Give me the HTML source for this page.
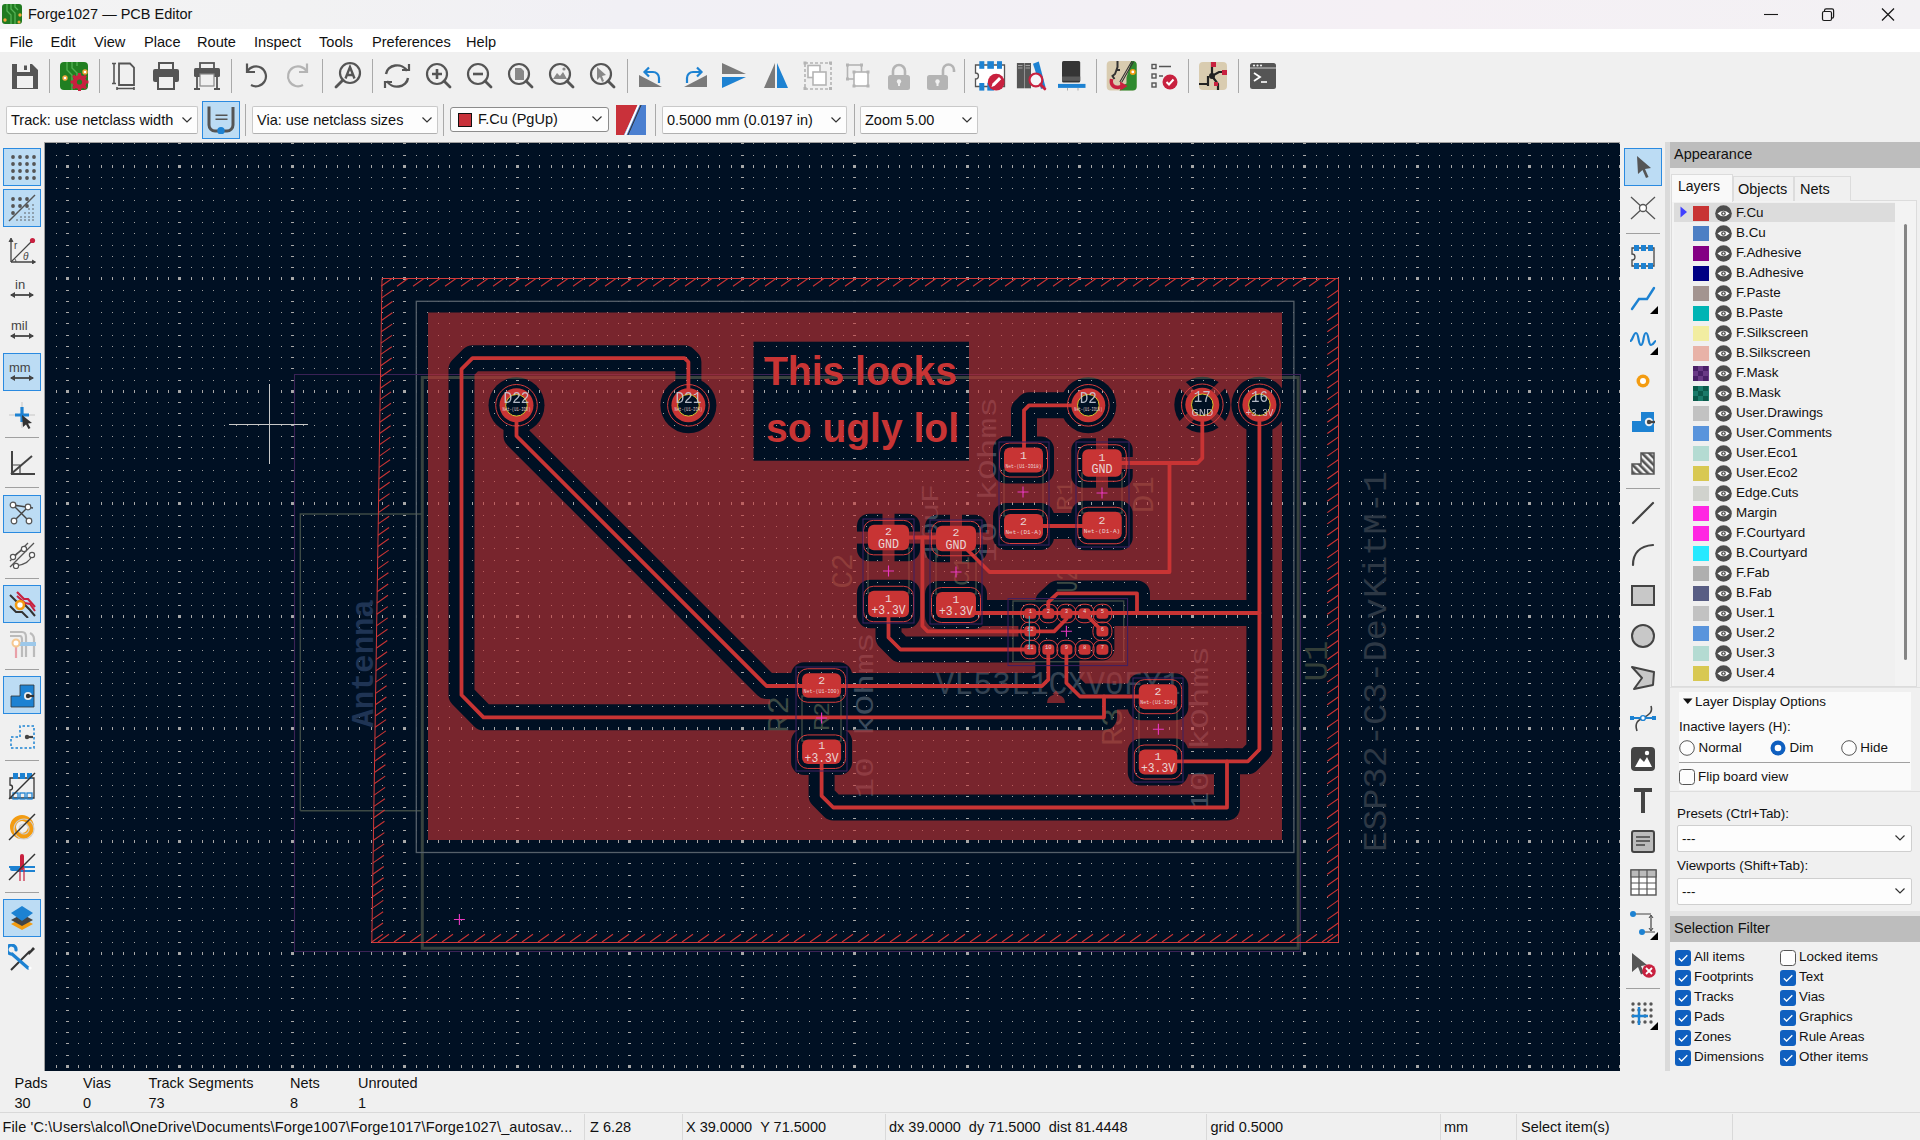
<!DOCTYPE html>
<html><head><meta charset="utf-8"><title>Forge1027 — PCB Editor</title>
<style>
*{margin:0;padding:0;box-sizing:border-box}
html,body{width:1920px;height:1140px;overflow:hidden;background:#f0f0f0;font-family:"Liberation Sans", sans-serif;color:#111}
.a{position:absolute;white-space:nowrap}
.sep{position:absolute;width:1px;background:#a9a9a9}
.hsep{position:absolute;height:1px;background:#a9a9a9}
.sel{position:absolute;background:#bcdcf4;border:1px solid #2a8ae0}
.dd{position:absolute;background:#fdfdfd;border:1px solid #c9c9c9;border-bottom-color:#b0b0b0;border-radius:2px;font-size:14.5px}
.dd span{position:absolute;left:4px;top:5px}
.lay{position:absolute;left:1674px;width:221px;height:20px;font-size:13.4px}
.lay .sw{position:absolute;left:19px;top:3px;width:16px;height:15px}
.lay .t{position:absolute;left:62px;top:2px}
.cb{position:absolute;width:16px;height:16px;border-radius:3px;background:#0f5fbf}
.cbt{position:absolute;font-size:13.4px}
</style></head><body>

<div class="a" style="left:0;top:0;width:1920px;height:29px;background:linear-gradient(90deg,#f3f3f3 0px,#f2f2f3 300px,#f1f0f5 620px,#f3f0f5 1100px,#f5f0f5 1400px,#f3f1f4 1920px)"></div>
<svg style="position:absolute;left:2px;top:4px" width="20" height="20" viewBox="0 0 20 20"><rect x="0" y="0" width="20" height="20" rx="3" fill="#207a20"/>
<path d="M5 0 V7 L9 11 V20 M9 0 V5 L13 9 V20 M13 0 V3 L16 6" stroke="#56b256" stroke-width="1.3" fill="none"/>
<circle cx="18" cy="11" r="1.7" fill="#f4a63a"/><circle cx="3" cy="16" r="1.7" fill="#f4a63a"/><circle cx="17" cy="18" r="1.5" fill="#f4a63a"/></svg>
<div class="a" style="left:28px;top:6px;font-size:14.5px;color:#111">Forge1027 — PCB Editor</div>
<svg style="position:absolute;left:1755px;top:6px" width="150" height="18" viewBox="0 0 150 18"><line x1="9" y1="8.5" x2="23" y2="8.5" stroke="#1a1a1a" stroke-width="1.1"/>
<rect x="67.5" y="5.5" width="9" height="9" rx="1.5" fill="none" stroke="#1a1a1a" stroke-width="1.2"/>
<path d="M69.5 5.5 V4.5 a1.6 1.6 0 0 1 1.6 -1.6 H77 a1.6 1.6 0 0 1 1.6 1.6 V10.5 a1.6 1.6 0 0 1 -1.6 1.6 H76.5" fill="none" stroke="#1a1a1a" stroke-width="1.2"/>
<path d="M127 2.5 L139 14.5 M139 2.5 L127 14.5" stroke="#1a1a1a" stroke-width="1.3"/></svg>
<div class="a" style="left:0;top:29px;width:1920px;height:23px;background:#ffffff"></div>
<div class="a" style="left:9.5px;top:33.5px;font-size:14.6px">File</div>
<div class="a" style="left:50.5px;top:33.5px;font-size:14.6px">Edit</div>
<div class="a" style="left:94px;top:33.5px;font-size:14.6px">View</div>
<div class="a" style="left:144px;top:33.5px;font-size:14.6px">Place</div>
<div class="a" style="left:197px;top:33.5px;font-size:14.6px">Route</div>
<div class="a" style="left:254px;top:33.5px;font-size:14.6px">Inspect</div>
<div class="a" style="left:319px;top:33.5px;font-size:14.6px">Tools</div>
<div class="a" style="left:372px;top:33.5px;font-size:14.6px">Preferences</div>
<div class="a" style="left:466px;top:33.5px;font-size:14.6px">Help</div>
<svg style="position:absolute;left:11px;top:62px" width="28" height="28" viewBox="0 0 28 28" overflow="visible"><path d="M1 2 H21 L27 8 V27 H1 Z" fill="#555"/><rect x="6" y="2" width="13" height="8" fill="#f0f0f0"/><rect x="13" y="3.5" width="3" height="4.5" fill="#555"/><rect x="6" y="14" width="16" height="12" fill="#f0f0f0"/></svg>
<svg style="position:absolute;left:60px;top:62px" width="28" height="28" viewBox="0 0 28 28" overflow="visible"><rect x="0" y="0" width="28" height="28" rx="4" fill="#217f21"/><path d="M7 0 V8 L12 13 V28 M12 0 V6 L17 11 V16 M17 0 V4" stroke="#4fae4f" stroke-width="1.4" fill="none"/><circle cx="25" cy="10" r="2" fill="#fff" stroke="#f4a63a" stroke-width="1.4"/><circle cx="5" cy="16" r="2" fill="#fff" stroke="#f4a63a" stroke-width="1.4"/><g transform="translate(19.5,20)"><circle r="7" fill="#c8213f"/><path d="M0 -9 V9 M-9 0 H9 M-6.4 -6.4 L6.4 6.4 M6.4 -6.4 L-6.4 6.4" stroke="#c8213f" stroke-width="3"/><circle r="2.6" fill="#217f21"/></g></svg>
<svg style="position:absolute;left:110px;top:62px" width="28" height="28" viewBox="0 0 28 28" overflow="visible"><path d="M9 1.5 H20 L24 5.5 V23 H9 Z" fill="none" stroke="#555" stroke-width="1.8"/><path d="M4 1 V22 M2 21.5 H6 M2 1.5 H6 M7 26.5 H24 M7 25 V28 M24 25 V28" stroke="#555" stroke-width="1.6" fill="none"/></svg>
<svg style="position:absolute;left:152px;top:62px" width="28" height="28" viewBox="0 0 28 28" overflow="visible"><rect x="7" y="1" width="14" height="7" fill="none" stroke="#555" stroke-width="2"/><rect x="1" y="7" width="26" height="13" rx="2" fill="#555"/><rect x="6" y="14" width="16" height="13" fill="#f0f0f0" stroke="#555" stroke-width="2"/></svg>
<svg style="position:absolute;left:193px;top:62px" width="28" height="28" viewBox="0 0 28 28" overflow="visible"><rect x="7" y="1" width="14" height="6" fill="none" stroke="#555" stroke-width="1.8"/><rect x="1" y="6" width="26" height="9" rx="1.5" fill="#555"/><rect x="7" y="12" width="14" height="12" fill="#f0f0f0" stroke="#888" stroke-width="1.2"/><path d="M4 15 V27 M1 27 H7 M24 15 V27 M21 27 H27" stroke="#555" stroke-width="1.8"/></svg>
<svg style="position:absolute;left:242px;top:62px" width="28" height="28" viewBox="0 0 28 28" overflow="visible"><path d="M5.5 9 A10 10 0 1 1 9 23" fill="none" stroke="#555" stroke-width="2.2"/><path d="M5 1.5 V10 H13" fill="none" stroke="#555" stroke-width="2.2"/></svg>
<svg style="position:absolute;left:284px;top:62px" width="28" height="28" viewBox="0 0 28 28" overflow="visible"><path d="M22.5 9 A10 10 0 1 0 19 23" fill="none" stroke="#b4b4b4" stroke-width="2.2"/><path d="M23 1.5 V10 H15" fill="none" stroke="#b4b4b4" stroke-width="2.2"/></svg>
<svg style="position:absolute;left:334px;top:62px" width="28" height="28" viewBox="0 0 28 28" overflow="visible"><circle cx="16" cy="11" r="10" fill="none" stroke="#555" stroke-width="2.2"/><path d="M9 18 L2 25" stroke="#555" stroke-width="2.8" stroke-linecap="round"/><path d="M11.5 16.5 L16 5 L20.5 16.5 M13 13 H19" fill="none" stroke="#555" stroke-width="2.4"/></svg>
<svg style="position:absolute;left:383px;top:62px" width="28" height="28" viewBox="0 0 28 28" overflow="visible"><path d="M3 12 A11 9.5 0 0 1 24 9" fill="none" stroke="#555" stroke-width="2.4"/><path d="M25 16 A11 9.5 0 0 1 4 19" fill="none" stroke="#555" stroke-width="2.4"/><path d="M19 8 H26 V2" fill="none" stroke="#555" stroke-width="2.2"/><path d="M9 20 H2 V26" fill="none" stroke="#555" stroke-width="2.2"/></svg>
<svg style="position:absolute;left:424px;top:62px" width="28" height="28" viewBox="0 0 28 28" overflow="visible"><circle cx="13" cy="12" r="10" fill="none" stroke="#555" stroke-width="2.2"/><path d="M20 19 L26 25" stroke="#555" stroke-width="2.8" stroke-linecap="round"/><path d="M13 7 V17 M8 12 H18" stroke="#555" stroke-width="2.6"/></svg>
<svg style="position:absolute;left:465px;top:62px" width="28" height="28" viewBox="0 0 28 28" overflow="visible"><circle cx="13" cy="12" r="10" fill="none" stroke="#555" stroke-width="2.2"/><path d="M20 19 L26 25" stroke="#555" stroke-width="2.8" stroke-linecap="round"/><path d="M8 12 H18" stroke="#555" stroke-width="2.6"/></svg>
<svg style="position:absolute;left:506px;top:62px" width="28" height="28" viewBox="0 0 28 28" overflow="visible"><circle cx="13" cy="12" r="10" fill="none" stroke="#555" stroke-width="2.2"/><path d="M20 19 L26 25" stroke="#555" stroke-width="2.8" stroke-linecap="round"/><path d="M9 6 H15 L18 9 V18 H9 Z" fill="#888"/></svg>
<svg style="position:absolute;left:547px;top:62px" width="28" height="28" viewBox="0 0 28 28" overflow="visible"><circle cx="13" cy="12" r="10" fill="none" stroke="#555" stroke-width="2.2"/><path d="M20 19 L26 25" stroke="#555" stroke-width="2.8" stroke-linecap="round"/><path d="M6 17 L10 11 L13 14 L16 10 L20 17 Z" fill="#888"/><circle cx="17" cy="7" r="1.6" fill="#888"/></svg>
<svg style="position:absolute;left:588px;top:62px" width="28" height="28" viewBox="0 0 28 28" overflow="visible"><circle cx="13" cy="12" r="10" fill="none" stroke="#555" stroke-width="2.2"/><path d="M20 19 L26 25" stroke="#555" stroke-width="2.8" stroke-linecap="round"/><path d="M9 5 L18 13 L14 14 L16 19 L14 20 L12 15 L9 18 Z" fill="#888"/></svg>
<svg style="position:absolute;left:638px;top:62px" width="28" height="28" viewBox="0 0 28 28" overflow="visible"><path d="M1 13 L1 25 L24 25 Z" fill="#7a7a7a"/><path d="M21 21 V16 A6 6 0 0 0 15 10 H8" fill="none" stroke="#1d82d2" stroke-width="2.2"/><path d="M11 5.5 L6.5 10 L11 14.5" fill="none" stroke="#1d82d2" stroke-width="2.2"/></svg>
<svg style="position:absolute;left:680px;top:62px" width="28" height="28" viewBox="0 0 28 28" overflow="visible"><path d="M27 13 L27 25 L4 25 Z" fill="#7a7a7a"/><path d="M7 21 V16 A6 6 0 0 1 13 10 H20" fill="none" stroke="#1d82d2" stroke-width="2.2"/><path d="M17 5.5 L21.5 10 L17 14.5" fill="none" stroke="#1d82d2" stroke-width="2.2"/></svg>
<svg style="position:absolute;left:720px;top:62px" width="28" height="28" viewBox="0 0 28 28" overflow="visible"><path d="M2 1 L26 12 H2 Z" fill="#7a7a7a"/><path d="M2 15 H26 L2 26 Z" fill="#1d82d2"/></svg>
<svg style="position:absolute;left:762px;top:62px" width="28" height="28" viewBox="0 0 28 28" overflow="visible"><path d="M13 1 V26 H2 Z" fill="#7a7a7a"/><path d="M15 1 V26 H26 Z" fill="#1d82d2"/></svg>
<svg style="position:absolute;left:803px;top:62px" width="28" height="28" viewBox="0 0 28 28" overflow="visible"><rect x="2" y="1" width="26" height="26" fill="none" stroke="#b4b4b4" stroke-width="1.6" stroke-dasharray="3 2"/><rect x="5" y="3.5" width="12" height="12" fill="#fff" stroke="#b4b4b4" stroke-width="1.6"/><rect x="10" y="10" width="13" height="13" fill="#fff" stroke="#b4b4b4" stroke-width="1.6"/><g fill="#b4b4b4"><rect x="0.5" y="-0.5" width="3" height="3"/><rect x="26" y="-0.5" width="3" height="3"/><rect x="0.5" y="25" width="3" height="3"/><rect x="26" y="25" width="3" height="3"/></g></svg>
<svg style="position:absolute;left:844px;top:62px" width="28" height="28" viewBox="0 0 28 28" overflow="visible"><rect x="3.5" y="3" width="14" height="14" fill="none" stroke="#b4b4b4" stroke-width="1.6"/><rect x="10" y="10" width="14" height="14" fill="#fff" stroke="#b4b4b4" stroke-width="1.6"/><g fill="#b4b4b4"><rect x="2" y="1.5" width="3" height="3"/><rect x="16" y="1.5" width="3" height="3"/><rect x="2" y="15.5" width="3" height="3"/><rect x="8.5" y="8.5" width="3" height="3"/><rect x="22.5" y="8.5" width="3" height="3"/><rect x="8.5" y="22.5" width="3" height="3"/><rect x="22.5" y="22.5" width="3" height="3"/></g></svg>
<svg style="position:absolute;left:885px;top:62px" width="28" height="28" viewBox="0 0 28 28" overflow="visible"><path d="M8 13 V9 A6 6 0 0 1 20 9 V13" fill="none" stroke="#b4b4b4" stroke-width="2.6"/><rect x="3" y="13" width="22" height="15" rx="2.5" fill="#b4b4b4"/><circle cx="14" cy="19.5" r="2.2" fill="#f0f0f0"/><rect x="13" y="20" width="2" height="4" fill="#f0f0f0"/></svg>
<svg style="position:absolute;left:926px;top:62px" width="28" height="28" viewBox="0 0 28 28" overflow="visible"><path d="M17 13 V8 A5.5 5.5 0 0 1 28 8 V10" fill="none" stroke="#b4b4b4" stroke-width="2.6"/><rect x="1" y="13" width="21" height="15" rx="2.5" fill="#b4b4b4"/><circle cx="11.5" cy="19.5" r="2.2" fill="#f0f0f0"/><rect x="10.5" y="20" width="2" height="4" fill="#f0f0f0"/></svg>
<svg style="position:absolute;left:976px;top:62px" width="28" height="28" viewBox="0 0 28 28" overflow="visible"><path d="M-0.5 3 H28.5 V24.5 H-0.5 V17 A3 3 0 0 0 -0.5 11 Z" fill="#fff" stroke="#555" stroke-width="1.3"/><g fill="#1d82d2"><rect x="3.3" y="-0.8" width="5" height="7.6"/><rect x="11.3" y="-0.8" width="6.6" height="7.6"/><rect x="21" y="-0.8" width="5" height="7.6"/><rect x="3.3" y="21" width="5" height="7.6"/><rect x="11.3" y="21" width="6.6" height="7.6"/></g><circle cx="20.2" cy="20.2" r="8.4" fill="#c8213f"/><path d="M15.5 25 L16.5 21.5 L23 15 L25.2 17.2 L18.7 23.7 Z" fill="#fff"/></svg>
<svg style="position:absolute;left:1017px;top:62px" width="28" height="28" viewBox="0 0 28 28" overflow="visible"><rect x="-0.1" y="1" width="7.1" height="25.3" fill="#555"/><rect x="7.4" y="1" width="6.6" height="25.3" fill="#555"/><path d="M1 3.5 H5.5 M1 6 H5.5 M8.5 3.5 H13 M8.5 6 H13" stroke="#aaa" stroke-width="0.9"/><path d="M16 1.8 L21.8 -0.5 L28.5 25 L24 27 Z" fill="#1d82d2"/><circle cx="18.9" cy="17.9" r="6.4" fill="#f4f6f8" stroke="#c8213f" stroke-width="2.2"/><path d="M23.5 22.5 L27.8 26.8" stroke="#c8213f" stroke-width="3" stroke-linecap="round"/></svg>
<svg style="position:absolute;left:1058px;top:62px" width="28" height="28" viewBox="0 0 28 28" overflow="visible"><rect x="4" y="-1" width="18.2" height="21.5" rx="1.5" fill="#353535"/><rect x="4" y="14.5" width="18.2" height="4.3" fill="#5a5a5a"/><rect x="0" y="21.9" width="27.5" height="4" fill="#1d82d2"/><path d="M9.5 26 V28.5 M20 26 V28.5" stroke="#aaa" stroke-width="1"/></svg>
<svg style="position:absolute;left:1108px;top:62px" width="28" height="28" viewBox="0 0 28 28" overflow="visible"><rect x="-1.3" y="-1" width="30" height="29.5" rx="4" fill="#d9ccb0"/><path d="M23.5 -1 H24.7 A4 4 0 0 1 28.7 3 V24.5 A4 4 0 0 1 24.7 28.5 H11.5 L14.5 23.5 L18.5 21.5 L18.5 15.5 Z" fill="#2f8a2f"/><path d="M25.6 -0.5 L13.6 20.5 M23.8 -0.8 L11.8 20" stroke="#333" stroke-width="1.1"/><circle cx="24.8" cy="9.9" r="2.2" fill="#fff" stroke="#f39c12" stroke-width="1.6"/><path d="M9.5 -1 V5 L8.5 8 L12 8 M8.5 8 L7 12 L4.5 14 L6.5 17" stroke="#333" stroke-width="2" fill="none"/><path d="M3.5 17 Q2 25 10 25.5 L14 24.5" fill="none" stroke="#c8213f" stroke-width="3.4"/><path d="M12 19.5 L19.5 24 L12.5 28.5 Z" fill="#c8213f"/></svg>
<svg style="position:absolute;left:1149px;top:62px" width="28" height="28" viewBox="0 0 28 28" overflow="visible"><g fill="none" stroke="#555" stroke-width="1.4"><rect x="3" y="2.5" width="4" height="4"/><rect x="3" y="12" width="4" height="4"/><rect x="3" y="21" width="4" height="4"/></g><path d="M10 4.5 H22 M10 14 H14" stroke="#555" stroke-width="1.6"/><circle cx="21" cy="20" r="7.5" fill="#c8213f"/><path d="M17.5 20 L20 22.5 L24.5 17.5" fill="none" stroke="#fff" stroke-width="2"/></svg>
<svg style="position:absolute;left:1199px;top:62px" width="28" height="28" viewBox="0 0 28 28" overflow="visible"><rect x="0" y="0" width="28" height="28" rx="4" fill="#d9ccb0"/><path d="M0 22 H10 M13 0 V14 M13 14 L20 10 H28 M13 14 L19 22 V28 M9 14 V24" stroke="#222" stroke-width="2.2" fill="none"/><circle cx="13" cy="14" r="3" fill="#222"/><rect x="12" y="0" width="5" height="5" fill="#c8213f"/><rect x="23" y="8" width="5" height="5" fill="#c8213f"/><rect x="15" y="20" width="4" height="4" fill="#c8213f"/></svg>
<svg style="position:absolute;left:1249px;top:62px" width="28" height="28" viewBox="0 0 28 28" overflow="visible"><rect x="1" y="1" width="26" height="26" rx="2.5" fill="#555"/><path d="M1 6 H27" stroke="#eee" stroke-width="0.8"/><circle cx="5" cy="3.5" r="1.1" fill="#eee"/><circle cx="8.5" cy="3.5" r="1.1" fill="#eee"/><circle cx="12" cy="3.5" r="1.1" fill="#eee"/><path d="M5 11 L11 15 L5 19" fill="none" stroke="#fff" stroke-width="1.8"/><path d="M12 20 H18" stroke="#fff" stroke-width="1.6"/></svg>
<div class="sep" style="left:49.0px;top:59px;height:34px"></div>
<div class="sep" style="left:99.0px;top:59px;height:34px"></div>
<div class="sep" style="left:231.0px;top:59px;height:34px"></div>
<div class="sep" style="left:322.0px;top:59px;height:34px"></div>
<div class="sep" style="left:372.0px;top:59px;height:34px"></div>
<div class="sep" style="left:627.0px;top:59px;height:34px"></div>
<div class="sep" style="left:964.0px;top:59px;height:34px"></div>
<div class="sep" style="left:1096.0px;top:59px;height:34px"></div>
<div class="sep" style="left:1188.0px;top:59px;height:34px"></div>
<div class="sep" style="left:1238.0px;top:59px;height:34px"></div>
<div class="dd" style="left:6px;top:106px;width:192px;height:28px"><span style="left:4px">Track: use netclass width</span></div>
<svg style="position:absolute;left:181px;top:116px" width="12" height="8" viewBox="0 0 12 8"><path d="M1.5 1.5 L6 6 L10.5 1.5" fill="none" stroke="#333" stroke-width="1.2"/></svg>
<div class="sel" style="left:202px;top:101px;width:38px;height:38px"></div>
<svg style="position:absolute;left:207px;top:106px" width="28" height="28" viewBox="0 0 28 28"><path d="M2 0.5 V19 A6 6 0 0 0 8 25 H20 A6 6 0 0 0 26 19 V1" fill="none" stroke="#555" stroke-width="3"/><path d="M8.5 9.3 H20.5 M8.5 13.2 H20.5" stroke="#555" stroke-width="1.5"/><circle cx="14" cy="24.8" r="3.7" fill="#1d82d2"/></svg>
<div class="sep" style="left:245px;top:104px;height:32px"></div>
<div class="dd" style="left:252px;top:106px;width:186px;height:28px"><span style="left:4px">Via: use netclass sizes</span></div>
<svg style="position:absolute;left:421px;top:116px" width="12" height="8" viewBox="0 0 12 8"><path d="M1.5 1.5 L6 6 L10.5 1.5" fill="none" stroke="#333" stroke-width="1.2"/></svg>
<div class="sep" style="left:443px;top:104px;height:32px"></div>
<div class="dd" style="left:450px;top:106.5px;width:158.5px;height:25.5px;border:1px solid #8c8c8c;border-radius:3px"><div style="position:absolute;left:7px;top:5.5px;width:14px;height:14px;background:#c8313a;border:1px solid #111"></div><span style="left:27px;top:3.5px">F.Cu (PgUp)</span></div>
<svg style="position:absolute;left:591px;top:115px" width="12" height="8" viewBox="0 0 12 8"><path d="M1.5 1.5 L6 6 L10.5 1.5" fill="none" stroke="#333" stroke-width="1.2"/></svg>
<svg style="position:absolute;left:616px;top:105px" width="30" height="30" viewBox="0 0 30 30"><path d="M0 0 H22 L8 30 H0 Z" fill="#c9313a"/><path d="M22 0 H30 V30 H8 Z" fill="#4a7fd0"/><path d="M23 -1 L9 31" stroke="#fff" stroke-width="2"/><path d="M25.5 -1 L11.5 31" stroke="#333" stroke-width="1"/></svg>
<div class="sep" style="left:654.5px;top:104px;height:32px"></div>
<div class="dd" style="left:662px;top:106px;width:185px;height:28px"><span style="left:4px">0.5000 mm (0.0197 in)</span></div>
<svg style="position:absolute;left:830px;top:116px" width="12" height="8" viewBox="0 0 12 8"><path d="M1.5 1.5 L6 6 L10.5 1.5" fill="none" stroke="#333" stroke-width="1.2"/></svg>
<div class="sep" style="left:853.5px;top:104px;height:32px"></div>
<div class="dd" style="left:860px;top:106px;width:118px;height:28px"><span style="left:4px">Zoom 5.00</span></div>
<svg style="position:absolute;left:961px;top:116px" width="12" height="8" viewBox="0 0 12 8"><path d="M1.5 1.5 L6 6 L10.5 1.5" fill="none" stroke="#333" stroke-width="1.2"/></svg>
<div class="a" style="left:0;top:142px;width:44px;height:929px;background:#f0f0f0"></div>
<div class="sel" style="left:3px;top:147.7px;width:38px;height:38px"></div>
<svg style="position:absolute;left:8px;top:152px" width="28" height="28" viewBox="0 0 28 28"><circle cx="5" cy="5" r="1.9" fill="#555"/><circle cx="5" cy="12" r="1.9" fill="#555"/><circle cx="5" cy="19" r="1.9" fill="#555"/><circle cx="5" cy="26" r="1.9" fill="#555"/><circle cx="12" cy="5" r="1.9" fill="#555"/><circle cx="12" cy="12" r="1.9" fill="#555"/><circle cx="12" cy="19" r="1.9" fill="#555"/><circle cx="12" cy="26" r="1.9" fill="#555"/><circle cx="19" cy="5" r="1.9" fill="#555"/><circle cx="19" cy="12" r="1.9" fill="#555"/><circle cx="19" cy="19" r="1.9" fill="#555"/><circle cx="19" cy="26" r="1.9" fill="#555"/><circle cx="26" cy="5" r="1.9" fill="#555"/><circle cx="26" cy="12" r="1.9" fill="#555"/><circle cx="26" cy="19" r="1.9" fill="#555"/><circle cx="26" cy="26" r="1.9" fill="#555"/></svg>
<div class="sel" style="left:3px;top:189.2px;width:38px;height:38px"></div>
<svg style="position:absolute;left:8px;top:193.5px" width="28" height="28" viewBox="0 0 28 28"><circle cx="5" cy="5" r="1.9" fill="#555"/><circle cx="5" cy="12" r="1.9" fill="#555"/><circle cx="12" cy="5" r="1.9" fill="#555"/><circle cx="12" cy="12" r="1.9" fill="#555"/><circle cx="19" cy="5" r="1.9" fill="#555"/><circle cx="19" cy="12" r="1.9" fill="#555"/><circle cx="5" cy="19" r="1.9" fill="#555"/><path d="M1 27 L27 1" stroke="#555" stroke-width="1.4"/><circle cx="25" cy="11" r="0.8" fill="#555"/><circle cx="25" cy="15" r="0.8" fill="#555"/><circle cx="21" cy="15" r="0.8" fill="#555"/><circle cx="25" cy="19" r="0.8" fill="#555"/><circle cx="21" cy="19" r="0.8" fill="#555"/><circle cx="17" cy="19" r="0.8" fill="#555"/><circle cx="25" cy="23" r="0.8" fill="#555"/><circle cx="21" cy="23" r="0.8" fill="#555"/><circle cx="17" cy="23" r="0.8" fill="#555"/><circle cx="13" cy="23" r="0.8" fill="#555"/><circle cx="25" cy="26" r="0.8" fill="#555"/><circle cx="21" cy="26" r="0.8" fill="#555"/><circle cx="17" cy="26" r="0.8" fill="#555"/><circle cx="13" cy="26" r="0.8" fill="#555"/><circle cx="9" cy="26" r="0.8" fill="#555"/></svg>
<svg style="position:absolute;left:8px;top:236px" width="28" height="28" viewBox="0 0 28 28"><path d="M3 26 H27 M3 26 V3" stroke="#444" stroke-width="1.3" fill="none"/><path d="M1 6 L3 2 L5 6 M24 24 L27.5 26 L24 28" fill="#444" stroke="#444" stroke-width="1"/><path d="M3 26 L24 5" stroke="#444" stroke-width="1.2"/><circle cx="24.5" cy="4.5" r="2.6" fill="#c8213f"/><text x="6" y="13" font-size="10" fill="#444" font-family="Liberation Sans">r</text><text x="15" y="24" font-size="10" font-style="italic" fill="#444" font-family="Liberation Sans">θ</text><path d="M8 26 A5 5 0 0 0 6.5 22.5" fill="none" stroke="#444" stroke-width="0.9"/></svg>
<svg style="position:absolute;left:8px;top:275px" width="28" height="28" viewBox="0 0 28 28"><text x="7" y="14" font-size="13" fill="#444" font-family="Liberation Sans">in</text><path d="M3 20 H25" stroke="#444" stroke-width="1.8"/><path d="M2 20 L7 17 V23 Z M26 20 L21 17 V23 Z" fill="#444"/></svg>
<svg style="position:absolute;left:8px;top:315.5px" width="28" height="28" viewBox="0 0 28 28"><text x="3" y="14" font-size="13" fill="#444" font-family="Liberation Sans">mil</text><path d="M3 20 H25" stroke="#444" stroke-width="1.8"/><path d="M2 20 L7 17 V23 Z M26 20 L21 17 V23 Z" fill="#444"/></svg>
<div class="sel" style="left:3px;top:353.2px;width:38px;height:38px"></div>
<svg style="position:absolute;left:8px;top:357.5px" width="28" height="28" viewBox="0 0 28 28"><text x="1" y="14" font-size="13" fill="#444" font-family="Liberation Sans">mm</text><path d="M3 20 H25" stroke="#444" stroke-width="1.8"/><path d="M2 20 L7 17 V23 Z M26 20 L21 17 V23 Z" fill="#444"/></svg>
<svg style="position:absolute;left:8px;top:400.5px" width="28" height="28" viewBox="0 0 28 28"><path d="M14 1 V27 M1 14 H27" stroke="#bbb" stroke-width="0.8"/><path d="M14 6 V21 M7 14 H21" stroke="#1d82d2" stroke-width="3.2"/><path d="M14 14 L24 22 L20 22.5 L22.5 27 L20.5 28 L18 23.5 L15 26 Z" fill="#333"/></svg>
<svg style="position:absolute;left:8px;top:448px" width="28" height="28" viewBox="0 0 28 28"><path d="M4 3 V26 H27" stroke="#444" stroke-width="2" fill="none"/><path d="M3 26 L24 8" stroke="#444" stroke-width="2"/><path d="M4 17 H12 V26" stroke="#444" stroke-width="1.2" fill="none"/></svg>
<div class="sel" style="left:3px;top:494.7px;width:38px;height:38px"></div>
<svg style="position:absolute;left:8px;top:499px" width="28" height="28" viewBox="0 0 28 28"><path d="M5 6 L21 22 M20 8 L6 22 M5 6 L25 9" stroke="#444" stroke-width="1.4"/><circle cx="5" cy="6" r="2.8" fill="#fff" stroke="#555" stroke-width="1.2"/><circle cx="20" cy="8" r="2.8" fill="#fff" stroke="#555" stroke-width="1.2"/><circle cx="6" cy="22" r="2.8" fill="#fff" stroke="#555" stroke-width="1.2"/><circle cx="21" cy="22" r="2.8" fill="#fff" stroke="#555" stroke-width="1.2"/></svg>
<svg style="position:absolute;left:8px;top:540.5px" width="28" height="28" viewBox="0 0 28 28"><path d="M2 26 L26 2 M2 20 L20 2" stroke="#555" stroke-width="1.3"/><path d="M8 25 C14 24 22 22 24 14 M5 16 C10 10 14 10 16 8" stroke="#555" stroke-width="1.2" fill="none"/><circle cx="5" cy="16" r="2.6" fill="#fff" stroke="#555" stroke-width="1.2"/><circle cx="16" cy="8" r="2.6" fill="#fff" stroke="#555" stroke-width="1.2"/><circle cx="8" cy="25" r="2.6" fill="#fff" stroke="#555" stroke-width="1.2"/><circle cx="24" cy="14" r="2.6" fill="#fff" stroke="#555" stroke-width="1.2"/></svg>
<div class="sel" style="left:3px;top:585.2px;width:38px;height:38px"></div>
<svg style="position:absolute;left:8px;top:589.5px" width="28" height="28" viewBox="0 0 28 28"><path d="M2 5 L9 12 L14 12 L22 20 L27 26" stroke="#333" stroke-width="2" fill="none"/><path d="M9 2 L16 9 L20 9 L27 17" stroke="#c8213f" stroke-width="2.2" fill="none"/><path d="M2 16 L8 22 L14 22 L20 28" stroke="#333" stroke-width="2" fill="none"/><path d="M9 6 L17 13 L22 14 L27 21" stroke="#c8213f" stroke-width="2" fill="none"/><circle cx="12" cy="15" r="4" fill="#fff" stroke="#f39c12" stroke-width="2.6"/></svg>
<svg style="position:absolute;left:8px;top:630px" width="28" height="28" viewBox="0 0 28 28"><path d="M2 2 H14 Q18 2 18 7 V27 M2 6 H12 Q14 6 14 10 V27" stroke="#bbb" stroke-width="2.2" fill="none"/><path d="M22 3 Q26 5 26 9 V27" stroke="#bbb" stroke-width="2.2" fill="none"/><rect x="8" y="12" width="20" height="4" fill="#9cc8ea"/><path d="M8 16 V28" stroke="#e8a0a8" stroke-width="2.2"/><circle cx="8" cy="13" r="3.5" fill="#fff" stroke="#f6c890" stroke-width="2"/></svg>
<div class="sel" style="left:3px;top:676.2px;width:38px;height:38px"></div>
<svg style="position:absolute;left:8px;top:680.5px" width="28" height="28" viewBox="0 0 28 28"><path d="M3 15 H12 V4 H26 V26 H3 Z" fill="#1d82d2" stroke="#333" stroke-width="0.8"/><circle cx="20" cy="15" r="4" fill="#eee"/><path d="M20 15 H26" stroke="#333" stroke-width="2.2"/><circle cx="20" cy="15" r="2.2" fill="#333"/></svg>
<svg style="position:absolute;left:8px;top:722px" width="28" height="28" viewBox="0 0 28 28"><path d="M3 15 H12 V4 H26 V26 H3 Z" fill="none" stroke="#1d82d2" stroke-width="1.5" stroke-dasharray="2.5 2"/><path d="M19 15 H25" stroke="#444" stroke-width="2.2"/><circle cx="19" cy="15" r="2.2" fill="#444"/></svg>
<svg style="position:absolute;left:8px;top:772px" width="28" height="28" viewBox="0 0 28 28"><path d="M2 6 H26 V26 H2 V18 A2.5 2.5 0 0 0 2 13 Z" fill="none" stroke="#333" stroke-width="1.3"/><g fill="#1d82d2"><rect x="5" y="1" width="5" height="6"/><rect x="12" y="1" width="5" height="6"/><rect x="19" y="1" width="5" height="6"/></g><g fill="none" stroke="#1d82d2" stroke-width="1.3"><rect x="5" y="21" width="5" height="6"/><rect x="12" y="21" width="5" height="6"/><rect x="19" y="21" width="5" height="6"/></g><path d="M1 27 L27 1" stroke="#333" stroke-width="1.4"/></svg>
<svg style="position:absolute;left:8px;top:812.5px" width="28" height="28" viewBox="0 0 28 28"><circle cx="14" cy="14" r="9" fill="none" stroke="#f39c12" stroke-width="6"/><circle cx="16" cy="16" r="10" fill="none" stroke="#ccc" stroke-width="1.2"/><circle cx="16" cy="16" r="5" fill="none" stroke="#ccc" stroke-width="1.2"/><path d="M1 27 L27 1" stroke="#333" stroke-width="1.4"/></svg>
<svg style="position:absolute;left:8px;top:853px" width="28" height="28" viewBox="0 0 28 28"><path d="M1 14 H27 M10 18 H27" stroke="#1d82d2" stroke-width="2"/><path d="M4 16 H13" stroke="#1d82d2" stroke-width="4" stroke-linecap="round"/><path d="M14 3 V15" stroke="#c8213f" stroke-width="4" stroke-linecap="round"/><path d="M12 15 V28 M16 15 V28" stroke="#c8213f" stroke-width="1.2"/><path d="M1 27 L27 1" stroke="#333" stroke-width="1.4"/></svg>
<div class="sel" style="left:3px;top:899.2px;width:38px;height:38px"></div>
<svg style="position:absolute;left:8px;top:903.5px" width="28" height="28" viewBox="0 0 28 28"><path d="M14 14 L25 20 L14 26 L3 20 Z" fill="#f39c12"/><path d="M14 10 L25 16 L14 22 L3 16 Z" fill="#444"/><path d="M14 2 L25 9 L14 17 L3 9 Z" fill="#1d82d2"/></svg>
<svg style="position:absolute;left:8px;top:944px" width="28" height="28" viewBox="0 0 28 28"><path d="M3 26 L22 7" stroke="#333" stroke-width="2"/><path d="M20 9 L25 3 L27 5 L21 11 Z" fill="#333"/><path d="M8 6 A4.5 4.5 0 1 0 4 10 L20 24" fill="none" stroke="#1d82d2" stroke-width="3.2" stroke-linecap="round"/><circle cx="22" cy="24" r="1.6" fill="#fff"/></svg>
<div class="hsep" style="left:5px;top:437px;width:34px;background:#a0a0a0"></div>
<div class="hsep" style="left:5px;top:487px;width:34px;background:#a0a0a0"></div>
<div class="hsep" style="left:5px;top:578px;width:34px;background:#a0a0a0"></div>
<div class="hsep" style="left:5px;top:669px;width:34px;background:#a0a0a0"></div>
<div class="hsep" style="left:5px;top:760px;width:34px;background:#a0a0a0"></div>
<div class="hsep" style="left:5px;top:892px;width:34px;background:#a0a0a0"></div>
<div class="sel" style="left:1624px;top:148px;width:38px;height:38px"></div>
<svg style="position:absolute;left:1629px;top:153px" width="30" height="30" viewBox="0 0 30 30" overflow="visible"><path d="M8 3 L22 15 L16 16 L19.5 24 L17 25 L13.5 17 L9 21 Z" fill="#555"/></svg>
<svg style="position:absolute;left:1629px;top:194px" width="30" height="30" viewBox="0 0 30 30" overflow="visible"><path d="M2 3 L26 25 M26 3 L2 25" stroke="#555" stroke-width="1.3"/><circle cx="14" cy="14" r="3.5" fill="#fff" stroke="#555" stroke-width="1.3"/></svg>
<svg style="position:absolute;left:1629px;top:243px" width="30" height="30" viewBox="0 0 30 30" overflow="visible"><path d="M3 5 H25 V23 H3 V17 A3 3 0 0 0 3 11 Z" fill="none" stroke="#444" stroke-width="1.3"/><g fill="#1d82d2"><rect x="5" y="2" width="5" height="6"/><rect x="12" y="2" width="5" height="6"/><rect x="19" y="2" width="5" height="6"/><rect x="5" y="20" width="5" height="6"/><rect x="12" y="20" width="5" height="6"/><rect x="19" y="20" width="5" height="6"/></g></svg>
<svg style="position:absolute;left:1629px;top:284px" width="30" height="30" viewBox="0 0 30 30" overflow="visible"><path d="M3 25 L10 15 H18 L25 4" fill="none" stroke="#1d82d2" stroke-width="2.4" stroke-linecap="round"/><path d="M21 30 L29 22 V30 Z" fill="#000"/></svg>
<svg style="position:absolute;left:1629px;top:325px" width="30" height="30" viewBox="0 0 30 30" overflow="visible"><path d="M1 16 C4 16 4 8 7 8 C10 8 9 20 12 20 C15 20 14 8 17 8 C20 8 19 20 22 20 C25 20 25 16 27 16" fill="none" stroke="#1d82d2" stroke-width="2.2"/><path d="M21 30 L29 22 V30 Z" fill="#000"/></svg>
<svg style="position:absolute;left:1629px;top:366.5px" width="30" height="30" viewBox="0 0 30 30" overflow="visible"><circle cx="14" cy="14" r="6.5" fill="#f39c12"/><circle cx="14" cy="14" r="3" fill="#fff"/></svg>
<svg style="position:absolute;left:1629px;top:408px" width="30" height="30" viewBox="0 0 30 30" overflow="visible"><path d="M3 13 H12 V4 H25 V24 H3 Z" fill="#1d82d2"/><circle cx="20" cy="14" r="4.2" fill="#f0f0f0"/><path d="M20 14 H26" stroke="#444" stroke-width="2.4"/><circle cx="20" cy="14" r="2.2" fill="#444"/></svg>
<svg style="position:absolute;left:1629px;top:448.5px" width="30" height="30" viewBox="0 0 30 30" overflow="visible"><defs><pattern id="hp" width="5" height="5" patternUnits="userSpaceOnUse" patternTransform="rotate(-45)"><rect width="2.6" height="5" fill="#555"/></pattern></defs><path d="M3 15 H12 V4 H25 V25 H3 Z" fill="url(#hp)" stroke="#555" stroke-width="1.5"/></svg>
<svg style="position:absolute;left:1629px;top:499px" width="30" height="30" viewBox="0 0 30 30" overflow="visible"><path d="M4 24 L24 4" stroke="#444" stroke-width="2.2" stroke-linecap="round"/></svg>
<svg style="position:absolute;left:1629px;top:540px" width="30" height="30" viewBox="0 0 30 30" overflow="visible"><path d="M4 25 C4 14 10 6 24 5" fill="none" stroke="#444" stroke-width="2.2" stroke-linecap="round"/></svg>
<svg style="position:absolute;left:1629px;top:580.5px" width="30" height="30" viewBox="0 0 30 30" overflow="visible"><rect x="3" y="5" width="22" height="19" fill="#c8c8c8" stroke="#444" stroke-width="2"/></svg>
<svg style="position:absolute;left:1629px;top:621.5px" width="30" height="30" viewBox="0 0 30 30" overflow="visible"><circle cx="14" cy="14" r="11" fill="#c8c8c8" stroke="#444" stroke-width="2"/></svg>
<svg style="position:absolute;left:1629px;top:663px" width="30" height="30" viewBox="0 0 30 30" overflow="visible"><path d="M3 4 L25 9 L24 22 L5 26 L13 15 Z" fill="#c8c8c8" stroke="#444" stroke-width="2" stroke-linejoin="round"/></svg>
<svg style="position:absolute;left:1629px;top:703.5px" width="30" height="30" viewBox="0 0 30 30" overflow="visible"><path d="M8 27 C5 18 10 16 14 14 C20 11 24 8 22 2" fill="none" stroke="#444" stroke-width="1.6"/><path d="M2 14 H26" stroke="#1d82d2" stroke-width="2"/><circle cx="14" cy="14" r="2.4" fill="#fff" stroke="#1d82d2" stroke-width="1.4"/><rect x="1" y="12" width="4" height="4" fill="#1d82d2"/><rect x="23" y="12" width="4" height="4" fill="#1d82d2"/></svg>
<svg style="position:absolute;left:1629px;top:744.5px" width="30" height="30" viewBox="0 0 30 30" overflow="visible"><rect x="2" y="2" width="24" height="24" rx="4" fill="#444"/><path d="M6 22 L11 13 L15 17 L18 12 L23 22 Z" fill="#fff"/><circle cx="18" cy="8" r="2.2" fill="#fff"/></svg>
<svg style="position:absolute;left:1629px;top:785.5px" width="30" height="30" viewBox="0 0 30 30" overflow="visible"><path d="M5 4 H23 M14 4 V27" stroke="#444" stroke-width="4"/></svg>
<svg style="position:absolute;left:1629px;top:826.5px" width="30" height="30" viewBox="0 0 30 30" overflow="visible"><rect x="3" y="4" width="22" height="21" rx="2" fill="#bbb" stroke="#444" stroke-width="2"/><path d="M7 10 H21 M7 14 H21 M7 18 H16" stroke="#444" stroke-width="1.6"/></svg>
<svg style="position:absolute;left:1629px;top:868px" width="30" height="30" viewBox="0 0 30 30" overflow="visible"><rect x="2" y="2" width="25" height="25" fill="#fff" stroke="#555" stroke-width="1.4"/><rect x="2" y="2" width="25" height="7" fill="#bbb" stroke="#555" stroke-width="1.2"/><path d="M2 15 H27 M2 21 H27 M10 2 V27 M18 2 V27" stroke="#555" stroke-width="1.2"/></svg>
<svg style="position:absolute;left:1629px;top:909.5px" width="30" height="30" viewBox="0 0 30 30" overflow="visible"><path d="M4 4 H22 M12 22 H26 M22 6 V20" stroke="#444" stroke-width="1.2"/><path d="M20 8 L22 5 L24 8 M20 18 L22 21 L24 18" fill="none" stroke="#444" stroke-width="1"/><circle cx="4" cy="4" r="3" fill="#1d82d2"/><circle cx="13" cy="22" r="3" fill="#1d82d2"/><path d="M21 30 L29 22 V30 Z" fill="#000"/></svg>
<svg style="position:absolute;left:1629px;top:951px" width="30" height="30" viewBox="0 0 30 30" overflow="visible"><path d="M3 2 L18 14 L12 15 L15 22 L12 23.5 L9 16 L3 21 Z" fill="#555"/><circle cx="20" cy="20" r="6.8" fill="#c8213f"/><path d="M17 17 L23 23 M23 17 L17 23" stroke="#fff" stroke-width="1.8"/></svg>
<svg style="position:absolute;left:1629px;top:1000px" width="30" height="30" viewBox="0 0 30 30" overflow="visible"><circle cx="4" cy="4" r="1.7" fill="#555"/><circle cx="4" cy="10" r="1.7" fill="#555"/><circle cx="4" cy="16" r="1.7" fill="#555"/><circle cx="4" cy="22" r="1.7" fill="#555"/><circle cx="10" cy="4" r="1.7" fill="#555"/><circle cx="10" cy="10" r="1.7" fill="#555"/><circle cx="10" cy="16" r="1.7" fill="#555"/><circle cx="10" cy="22" r="1.7" fill="#555"/><circle cx="16" cy="4" r="1.7" fill="#555"/><circle cx="16" cy="10" r="1.7" fill="#555"/><circle cx="16" cy="16" r="1.7" fill="#555"/><circle cx="16" cy="22" r="1.7" fill="#555"/><circle cx="22" cy="4" r="1.7" fill="#555"/><circle cx="22" cy="10" r="1.7" fill="#555"/><circle cx="22" cy="16" r="1.7" fill="#555"/><circle cx="22" cy="22" r="1.7" fill="#555"/><path d="M10 7 V25 M3 16 H19" stroke="#1d82d2" stroke-width="2.4"/><path d="M21 30 L29 22 V30 Z" fill="#000"/></svg>
<div class="hsep" style="left:1626px;top:232.5px;width:34px;background:#a0a0a0"></div>
<div class="hsep" style="left:1626px;top:487.5px;width:34px;background:#a0a0a0"></div>
<div class="hsep" style="left:1626px;top:988px;width:34px;background:#a0a0a0"></div>
<div class="a" style="left:44px;top:142px;width:1576px;height:929px;background:#a0a0a0"></div>
<svg style="position:absolute;left:45px;top:143px" width="1575" height="928" viewBox="45 143 1575 928">
<defs><pattern id="gmin" x="67" y="166" width="45" height="45" patternUnits="userSpaceOnUse"><g fill="#a0a0a0"><rect x="0" y="0" width="1" height="1"/><rect x="0" y="11" width="1" height="1"/><rect x="0" y="22" width="1" height="1"/><rect x="0" y="34" width="1" height="1"/><rect x="11" y="0" width="1" height="1"/><rect x="11" y="11" width="1" height="1"/><rect x="11" y="22" width="1" height="1"/><rect x="11" y="34" width="1" height="1"/><rect x="22" y="0" width="1" height="1"/><rect x="22" y="11" width="1" height="1"/><rect x="22" y="22" width="1" height="1"/><rect x="22" y="34" width="1" height="1"/><rect x="34" y="0" width="1" height="1"/><rect x="34" y="11" width="1" height="1"/><rect x="34" y="22" width="1" height="1"/><rect x="34" y="34" width="1" height="1"/></g></pattern><pattern id="gvb" x="67" y="0" width="45" height="3" patternUnits="userSpaceOnUse"><g fill="#a8a8a8"><rect x="0" y="0" width="1" height="3"/><rect x="11" y="0" width="1" height="3"/><rect x="22" y="0" width="1" height="3"/><rect x="34" y="0" width="1" height="3"/></g></pattern><pattern id="ghb" x="0" y="166" width="3" height="45" patternUnits="userSpaceOnUse"><g fill="#a8a8a8"><rect x="0" y="0" width="3" height="1"/><rect x="0" y="11" width="3" height="1"/><rect x="0" y="22" width="3" height="1"/><rect x="0" y="34" width="3" height="1"/></g></pattern><mask id="zm" maskUnits="userSpaceOnUse" x="45" y="143" width="1575" height="928"><rect x="428" y="312.5" width="854" height="527.5" fill="#fff"/>
<rect x="1071.25" y="438.25" width="61.50" height="49.50" rx="12" fill="#000"/>
<rect x="1096" y="437.25" width="12" height="51.5" fill="#fff"/>
<rect x="1102" y="457" width="31.75" height="12" fill="#fff"/>
<rect x="857.00" y="513.85" width="63.00" height="47.50" rx="12" fill="#000"/>
<rect x="882.5" y="512.85" width="12" height="49.5" fill="#fff"/>
<rect x="856.0" y="531.6" width="65" height="12" fill="#fff"/>
<rect x="925.00" y="514.75" width="62.00" height="47.50" rx="12" fill="#000"/>
<rect x="950" y="513.75" width="12" height="49.5" fill="#fff"/>
<rect x="924.0" y="532.5" width="64" height="12" fill="#fff"/>
<circle cx="1202.3" cy="404.8" r="28" fill="#000"/>
<rect x="1197.8" y="374.8" width="9" height="30" fill="#fff" transform="rotate(45 1202.3 404.8)"/>
<rect x="1197.8" y="374.8" width="9" height="30" fill="#fff" transform="rotate(135 1202.3 404.8)"/>
<rect x="1197.8" y="374.8" width="9" height="30" fill="#fff" transform="rotate(225 1202.3 404.8)"/>
<rect x="1197.8" y="374.8" width="9" height="30" fill="#fff" transform="rotate(315 1202.3 404.8)"/>
<circle cx="1202.3" cy="404.8" r="17" fill="#000"/>
<g fill="none" stroke="#000" stroke-width="26" stroke-linejoin="round" stroke-linecap="round"><polyline points="688.4,405 688.4,362 684.5,358.2 472.5,358.2 461.5,369.2 461.5,695 483.5,717.3 1104,717.3 1104,696.5"/><polyline points="516.5,405 516.5,436 766.5,686 1042,686 1048.3,679.7 1048.3,649.5"/><polyline points="1088.3,405.3 1029,405.3 1024,410.3 1024,460"/><polyline points="1023.5,526 1102,526"/><polyline points="956,613 1259.4,613"/><polyline points="1048.3,613 1048.3,602 1057.5,593.4 1137,593.4 1137,613"/><polyline points="888.5,604 888.5,637.5 900.5,649.5 1030.3,649.5"/><polyline points="1259.4,405 1259.4,749.5 1248,761.3 1158,761.3"/><polyline points="821.6,751.7 821.6,795.8 833.3,807.5 1227,807.5 1227,761.3"/><polyline points="1066.4,649.5 1066.4,683 1080,696.5 1158,696.5"/></g>
<rect x="993.00" y="436.50" width="61.00" height="47.00" rx="13" fill="#000"/>
<rect x="993.00" y="503.00" width="61.00" height="47.00" rx="13" fill="#000"/>
<rect x="1071.25" y="500.75" width="61.50" height="49.50" rx="13" fill="#000"/>
<rect x="857.00" y="579.75" width="63.00" height="48.50" rx="13" fill="#000"/>
<rect x="925.00" y="581.00" width="62.00" height="48.00" rx="13" fill="#000"/>
<rect x="791.10" y="662.25" width="61.00" height="46.50" rx="13" fill="#000"/>
<rect x="791.10" y="728.45" width="61.00" height="46.50" rx="13" fill="#000"/>
<rect x="1127.75" y="673.20" width="60.50" height="47.00" rx="13" fill="#000"/>
<rect x="1127.75" y="738.50" width="60.50" height="47.00" rx="13" fill="#000"/>
<circle cx="516.5" cy="405.3" r="28" fill="#000"/>
<circle cx="688.4" cy="405.3" r="28" fill="#000"/>
<circle cx="1088.3" cy="405.3" r="28" fill="#000"/>
<circle cx="1259.4" cy="404.8" r="28" fill="#000"/>
<rect x="1018.40" y="602.50" width="96.00" height="58.00" rx="12" fill="#000"/>
<rect x="753.5" y="341.7" width="215.5" height="119" fill="#000"/>
<rect x="770" y="694" width="334" height="14" fill="#000"/>
<path d="M1047 703 Q1047 697 1053 695 L1056 692.5 L1059 695 Q1065 697 1065 703 Z" fill="#fff"/></mask></defs>
<rect x="45" y="143" width="1575" height="928" fill="#001023"/>
<g shape-rendering="crispEdges"><rect x="45" y="143" width="1575" height="928" fill="url(#gmin)"/>
<rect x="45" y="52" width="1575" height="3" fill="url(#gvb)" transform="translate(0,0)"/>
<rect x="45" y="165" width="1575" height="3" fill="url(#gvb)" transform="translate(0,0)"/>
<rect x="45" y="277" width="1575" height="3" fill="url(#gvb)" transform="translate(0,0)"/>
<rect x="45" y="390" width="1575" height="3" fill="url(#gvb)" transform="translate(0,0)"/>
<rect x="45" y="502" width="1575" height="3" fill="url(#gvb)" transform="translate(0,0)"/>
<rect x="45" y="615" width="1575" height="3" fill="url(#gvb)" transform="translate(0,0)"/>
<rect x="45" y="727" width="1575" height="3" fill="url(#gvb)" transform="translate(0,0)"/>
<rect x="45" y="840" width="1575" height="3" fill="url(#gvb)" transform="translate(0,0)"/>
<rect x="45" y="952" width="1575" height="3" fill="url(#gvb)" transform="translate(0,0)"/>
<rect x="45" y="1065" width="1575" height="3" fill="url(#gvb)" transform="translate(0,0)"/>
<rect x="-47" y="143" width="3" height="928" fill="url(#ghb)"/>
<rect x="66" y="143" width="3" height="928" fill="url(#ghb)"/>
<rect x="178" y="143" width="3" height="928" fill="url(#ghb)"/>
<rect x="291" y="143" width="3" height="928" fill="url(#ghb)"/>
<rect x="403" y="143" width="3" height="928" fill="url(#ghb)"/>
<rect x="516" y="143" width="3" height="928" fill="url(#ghb)"/>
<rect x="628" y="143" width="3" height="928" fill="url(#ghb)"/>
<rect x="741" y="143" width="3" height="928" fill="url(#ghb)"/>
<rect x="853" y="143" width="3" height="928" fill="url(#ghb)"/>
<rect x="966" y="143" width="3" height="928" fill="url(#ghb)"/>
<rect x="1078" y="143" width="3" height="928" fill="url(#ghb)"/>
<rect x="1191" y="143" width="3" height="928" fill="url(#ghb)"/>
<rect x="1303" y="143" width="3" height="928" fill="url(#ghb)"/>
<rect x="1416" y="143" width="3" height="928" fill="url(#ghb)"/>
<rect x="1528" y="143" width="3" height="928" fill="url(#ghb)"/>
<rect x="1641" y="143" width="3" height="928" fill="url(#ghb)"/>
<g fill="#a8a8a8"><rect x="-47" y="52" width="3" height="3"/><rect x="-47" y="165" width="3" height="3"/><rect x="-47" y="277" width="3" height="3"/><rect x="-47" y="390" width="3" height="3"/><rect x="-47" y="502" width="3" height="3"/><rect x="-47" y="615" width="3" height="3"/><rect x="-47" y="727" width="3" height="3"/><rect x="-47" y="840" width="3" height="3"/><rect x="-47" y="952" width="3" height="3"/><rect x="-47" y="1065" width="3" height="3"/><rect x="66" y="52" width="3" height="3"/><rect x="66" y="165" width="3" height="3"/><rect x="66" y="277" width="3" height="3"/><rect x="66" y="390" width="3" height="3"/><rect x="66" y="502" width="3" height="3"/><rect x="66" y="615" width="3" height="3"/><rect x="66" y="727" width="3" height="3"/><rect x="66" y="840" width="3" height="3"/><rect x="66" y="952" width="3" height="3"/><rect x="66" y="1065" width="3" height="3"/><rect x="178" y="52" width="3" height="3"/><rect x="178" y="165" width="3" height="3"/><rect x="178" y="277" width="3" height="3"/><rect x="178" y="390" width="3" height="3"/><rect x="178" y="502" width="3" height="3"/><rect x="178" y="615" width="3" height="3"/><rect x="178" y="727" width="3" height="3"/><rect x="178" y="840" width="3" height="3"/><rect x="178" y="952" width="3" height="3"/><rect x="178" y="1065" width="3" height="3"/><rect x="291" y="52" width="3" height="3"/><rect x="291" y="165" width="3" height="3"/><rect x="291" y="277" width="3" height="3"/><rect x="291" y="390" width="3" height="3"/><rect x="291" y="502" width="3" height="3"/><rect x="291" y="615" width="3" height="3"/><rect x="291" y="727" width="3" height="3"/><rect x="291" y="840" width="3" height="3"/><rect x="291" y="952" width="3" height="3"/><rect x="291" y="1065" width="3" height="3"/><rect x="403" y="52" width="3" height="3"/><rect x="403" y="165" width="3" height="3"/><rect x="403" y="277" width="3" height="3"/><rect x="403" y="390" width="3" height="3"/><rect x="403" y="502" width="3" height="3"/><rect x="403" y="615" width="3" height="3"/><rect x="403" y="727" width="3" height="3"/><rect x="403" y="840" width="3" height="3"/><rect x="403" y="952" width="3" height="3"/><rect x="403" y="1065" width="3" height="3"/><rect x="516" y="52" width="3" height="3"/><rect x="516" y="165" width="3" height="3"/><rect x="516" y="277" width="3" height="3"/><rect x="516" y="390" width="3" height="3"/><rect x="516" y="502" width="3" height="3"/><rect x="516" y="615" width="3" height="3"/><rect x="516" y="727" width="3" height="3"/><rect x="516" y="840" width="3" height="3"/><rect x="516" y="952" width="3" height="3"/><rect x="516" y="1065" width="3" height="3"/><rect x="628" y="52" width="3" height="3"/><rect x="628" y="165" width="3" height="3"/><rect x="628" y="277" width="3" height="3"/><rect x="628" y="390" width="3" height="3"/><rect x="628" y="502" width="3" height="3"/><rect x="628" y="615" width="3" height="3"/><rect x="628" y="727" width="3" height="3"/><rect x="628" y="840" width="3" height="3"/><rect x="628" y="952" width="3" height="3"/><rect x="628" y="1065" width="3" height="3"/><rect x="741" y="52" width="3" height="3"/><rect x="741" y="165" width="3" height="3"/><rect x="741" y="277" width="3" height="3"/><rect x="741" y="390" width="3" height="3"/><rect x="741" y="502" width="3" height="3"/><rect x="741" y="615" width="3" height="3"/><rect x="741" y="727" width="3" height="3"/><rect x="741" y="840" width="3" height="3"/><rect x="741" y="952" width="3" height="3"/><rect x="741" y="1065" width="3" height="3"/><rect x="853" y="52" width="3" height="3"/><rect x="853" y="165" width="3" height="3"/><rect x="853" y="277" width="3" height="3"/><rect x="853" y="390" width="3" height="3"/><rect x="853" y="502" width="3" height="3"/><rect x="853" y="615" width="3" height="3"/><rect x="853" y="727" width="3" height="3"/><rect x="853" y="840" width="3" height="3"/><rect x="853" y="952" width="3" height="3"/><rect x="853" y="1065" width="3" height="3"/><rect x="966" y="52" width="3" height="3"/><rect x="966" y="165" width="3" height="3"/><rect x="966" y="277" width="3" height="3"/><rect x="966" y="390" width="3" height="3"/><rect x="966" y="502" width="3" height="3"/><rect x="966" y="615" width="3" height="3"/><rect x="966" y="727" width="3" height="3"/><rect x="966" y="840" width="3" height="3"/><rect x="966" y="952" width="3" height="3"/><rect x="966" y="1065" width="3" height="3"/><rect x="1078" y="52" width="3" height="3"/><rect x="1078" y="165" width="3" height="3"/><rect x="1078" y="277" width="3" height="3"/><rect x="1078" y="390" width="3" height="3"/><rect x="1078" y="502" width="3" height="3"/><rect x="1078" y="615" width="3" height="3"/><rect x="1078" y="727" width="3" height="3"/><rect x="1078" y="840" width="3" height="3"/><rect x="1078" y="952" width="3" height="3"/><rect x="1078" y="1065" width="3" height="3"/><rect x="1191" y="52" width="3" height="3"/><rect x="1191" y="165" width="3" height="3"/><rect x="1191" y="277" width="3" height="3"/><rect x="1191" y="390" width="3" height="3"/><rect x="1191" y="502" width="3" height="3"/><rect x="1191" y="615" width="3" height="3"/><rect x="1191" y="727" width="3" height="3"/><rect x="1191" y="840" width="3" height="3"/><rect x="1191" y="952" width="3" height="3"/><rect x="1191" y="1065" width="3" height="3"/><rect x="1303" y="52" width="3" height="3"/><rect x="1303" y="165" width="3" height="3"/><rect x="1303" y="277" width="3" height="3"/><rect x="1303" y="390" width="3" height="3"/><rect x="1303" y="502" width="3" height="3"/><rect x="1303" y="615" width="3" height="3"/><rect x="1303" y="727" width="3" height="3"/><rect x="1303" y="840" width="3" height="3"/><rect x="1303" y="952" width="3" height="3"/><rect x="1303" y="1065" width="3" height="3"/><rect x="1416" y="52" width="3" height="3"/><rect x="1416" y="165" width="3" height="3"/><rect x="1416" y="277" width="3" height="3"/><rect x="1416" y="390" width="3" height="3"/><rect x="1416" y="502" width="3" height="3"/><rect x="1416" y="615" width="3" height="3"/><rect x="1416" y="727" width="3" height="3"/><rect x="1416" y="840" width="3" height="3"/><rect x="1416" y="952" width="3" height="3"/><rect x="1416" y="1065" width="3" height="3"/><rect x="1528" y="52" width="3" height="3"/><rect x="1528" y="165" width="3" height="3"/><rect x="1528" y="277" width="3" height="3"/><rect x="1528" y="390" width="3" height="3"/><rect x="1528" y="502" width="3" height="3"/><rect x="1528" y="615" width="3" height="3"/><rect x="1528" y="727" width="3" height="3"/><rect x="1528" y="840" width="3" height="3"/><rect x="1528" y="952" width="3" height="3"/><rect x="1528" y="1065" width="3" height="3"/><rect x="1641" y="52" width="3" height="3"/><rect x="1641" y="165" width="3" height="3"/><rect x="1641" y="277" width="3" height="3"/><rect x="1641" y="390" width="3" height="3"/><rect x="1641" y="502" width="3" height="3"/><rect x="1641" y="615" width="3" height="3"/><rect x="1641" y="727" width="3" height="3"/><rect x="1641" y="840" width="3" height="3"/><rect x="1641" y="952" width="3" height="3"/><rect x="1641" y="1065" width="3" height="3"/></g></g>
<text x="0" y="0" transform="translate(373,663.5) rotate(-90)" font-family="Liberation Mono" font-size="32" fill="#1f3454" text-anchor="middle" font-weight="bold" textLength="128" lengthAdjust="spacingAndGlyphs">Antenna</text>
<text x="0" y="0" transform="translate(1386,661.5) rotate(-90)" font-family="Liberation Mono" font-size="34" fill="#2d3845" text-anchor="middle" textLength="381" lengthAdjust="spacingAndGlyphs">ESP32-C3-DevKitM-1</text>
<text x="0" y="0" transform="translate(1327,661) rotate(-90)" font-family="Liberation Mono" font-size="34" fill="#333e38" text-anchor="middle" textLength="41" lengthAdjust="spacingAndGlyphs">U1</text>
<text x="0" y="0" transform="translate(873,715.6) rotate(-90)" font-family="Liberation Mono" font-size="26" fill="#3b4a5a" text-anchor="middle" textLength="166" lengthAdjust="spacingAndGlyphs">10 kOhms</text>
<text x="0" y="0" transform="translate(788,714.5) rotate(-90)" font-family="Liberation Mono" font-size="30" fill="#3c4a44" text-anchor="middle" textLength="37" lengthAdjust="spacingAndGlyphs">R2</text>
<text x="0" y="0" transform="translate(829,716.5) rotate(-90)" font-family="Liberation Mono" font-size="22" fill="#3c4a44" text-anchor="middle" textLength="29" lengthAdjust="spacingAndGlyphs">R2</text>
<text x="0" y="0" transform="translate(996,480) rotate(-90)" font-family="Liberation Mono" font-size="26" fill="#3b4a5a" text-anchor="middle" textLength="166" lengthAdjust="spacingAndGlyphs">10 kOhms</text>
<text x="0" y="0" transform="translate(1208,729) rotate(-90)" font-family="Liberation Mono" font-size="26" fill="#3b4a5a" text-anchor="middle" textLength="166" lengthAdjust="spacingAndGlyphs">10 kOhms</text>
<text x="0" y="0" transform="translate(1122,727) rotate(-90)" font-family="Liberation Mono" font-size="30" fill="#3c4a44" text-anchor="middle" textLength="38" lengthAdjust="spacingAndGlyphs">R3</text>
<text x="0" y="0" transform="translate(1153,494.8) rotate(-90)" font-family="Liberation Mono" font-size="30" fill="#3c4a44" text-anchor="middle" textLength="37" lengthAdjust="spacingAndGlyphs">D1</text>
<text x="0" y="0" transform="translate(1072,495.5) rotate(-90)" font-family="Liberation Mono" font-size="22" fill="#3c4a44" text-anchor="middle" textLength="31" lengthAdjust="spacingAndGlyphs">R1</text>
<text x="0" y="0" transform="translate(852,571) rotate(-90)" font-family="Liberation Mono" font-size="30" fill="#3c4a44" text-anchor="middle" textLength="35" lengthAdjust="spacingAndGlyphs">C2</text>
<text x="0" y="0" transform="translate(938,522) rotate(-90)" font-family="Liberation Mono" font-size="24" fill="#3b4a5a" text-anchor="middle" textLength="76" lengthAdjust="spacingAndGlyphs">10uF</text>
<text x="0" y="0" transform="translate(969,571) rotate(-90)" font-family="Liberation Mono" font-size="22" fill="#3c4a44" text-anchor="middle" textLength="30" lengthAdjust="spacingAndGlyphs">C1</text>
<text x="0" y="0" transform="translate(1077,580.5) rotate(-90)" font-family="Liberation Mono" font-size="30" fill="#3c4a44" text-anchor="middle" textLength="24" lengthAdjust="spacingAndGlyphs">U2</text>
<text x="935.5" y="694.4" font-family="Liberation Mono" font-size="34" fill="#334252" textLength="245" lengthAdjust="spacingAndGlyphs">VL53L1CXV0FY1</text>
<g fill="none" stroke="#3c4a44" stroke-width="1.4"><rect x="1004" y="470" width="39" height="46"/><rect x="1082" y="473" width="40" height="40"/><rect x="868" y="548" width="41" height="45"/><rect x="936" y="549" width="40" height="45"/><rect x="802" y="696" width="39" height="45"/><rect x="1139" y="707" width="38" height="45"/></g>
<g fill="none" stroke="#3d4a45" stroke-width="1.4"><path d="M422.3 948.3 V377.6 H1298.2 V948.3 Z" stroke-width="3" stroke="#36423e"/><path d="M300.3 810.8 V514 H421.8 M300.3 810.8 H421.8"/><rect x="1013" y="601" width="110.7" height="60.7"/></g>
<rect x="416.3" y="301.3" width="877.6" height="551.2" fill="none" stroke="#55606a" stroke-width="1.3"/>
<path d="M294.5 951.5 V374.5 H1300.5 V951.5 Z" fill="none" stroke="#3a2256" stroke-width="1.1"/>
<rect x="45" y="143" width="1575" height="928" fill="#c83434" fill-opacity="0.6" mask="url(#zm)"/>
<path d="M382 278.5 H1338.5 V942.5 H371.8 Z" fill="none" stroke="#d23a3a" stroke-width="1"/>
<path d="M381.0 286.2 L392.0 278.5 M397.0 286.2 L408.0 278.5 M413.0 286.2 L424.0 278.5 M429.0 286.2 L440.0 278.5 M445.0 286.2 L456.0 278.5 M461.0 286.2 L472.0 278.5 M477.0 286.2 L488.0 278.5 M493.0 286.2 L504.0 278.5 M509.0 286.2 L520.0 278.5 M525.0 286.2 L536.0 278.5 M541.0 286.2 L552.0 278.5 M557.0 286.2 L568.0 278.5 M573.0 286.2 L584.0 278.5 M589.0 286.2 L600.0 278.5 M605.0 286.2 L616.0 278.5 M621.0 286.2 L632.0 278.5 M637.0 286.2 L648.0 278.5 M653.0 286.2 L664.0 278.5 M669.0 286.2 L680.0 278.5 M685.0 286.2 L696.0 278.5 M701.0 286.2 L712.0 278.5 M717.0 286.2 L728.0 278.5 M733.0 286.2 L744.0 278.5 M749.0 286.2 L760.0 278.5 M765.0 286.2 L776.0 278.5 M781.0 286.2 L792.0 278.5 M797.0 286.2 L808.0 278.5 M813.0 286.2 L824.0 278.5 M829.0 286.2 L840.0 278.5 M845.0 286.2 L856.0 278.5 M861.0 286.2 L872.0 278.5 M877.0 286.2 L888.0 278.5 M893.0 286.2 L904.0 278.5 M909.0 286.2 L920.0 278.5 M925.0 286.2 L936.0 278.5 M941.0 286.2 L952.0 278.5 M957.0 286.2 L968.0 278.5 M973.0 286.2 L984.0 278.5 M989.0 286.2 L1000.0 278.5 M1005.0 286.2 L1016.0 278.5 M1021.0 286.2 L1032.0 278.5 M1037.0 286.2 L1048.0 278.5 M1053.0 286.2 L1064.0 278.5 M1069.0 286.2 L1080.0 278.5 M1085.0 286.2 L1096.0 278.5 M1101.0 286.2 L1112.0 278.5 M1117.0 286.2 L1128.0 278.5 M1133.0 286.2 L1144.0 278.5 M1149.0 286.2 L1160.0 278.5 M1165.0 286.2 L1176.0 278.5 M1181.0 286.2 L1192.0 278.5 M1197.0 286.2 L1208.0 278.5 M1213.0 286.2 L1224.0 278.5 M1229.0 286.2 L1240.0 278.5 M1245.0 286.2 L1256.0 278.5 M1261.0 286.2 L1272.0 278.5 M1277.0 286.2 L1288.0 278.5 M1293.0 286.2 L1304.0 278.5 M1309.0 286.2 L1320.0 278.5 M1325.0 286.2 L1336.0 278.5 M378.0 942 L389.0 934.3 M394.0 942 L405.0 934.3 M410.0 942 L421.0 934.3 M426.0 942 L437.0 934.3 M442.0 942 L453.0 934.3 M458.0 942 L469.0 934.3 M474.0 942 L485.0 934.3 M490.0 942 L501.0 934.3 M506.0 942 L517.0 934.3 M522.0 942 L533.0 934.3 M538.0 942 L549.0 934.3 M554.0 942 L565.0 934.3 M570.0 942 L581.0 934.3 M586.0 942 L597.0 934.3 M602.0 942 L613.0 934.3 M618.0 942 L629.0 934.3 M634.0 942 L645.0 934.3 M650.0 942 L661.0 934.3 M666.0 942 L677.0 934.3 M682.0 942 L693.0 934.3 M698.0 942 L709.0 934.3 M714.0 942 L725.0 934.3 M730.0 942 L741.0 934.3 M746.0 942 L757.0 934.3 M762.0 942 L773.0 934.3 M778.0 942 L789.0 934.3 M794.0 942 L805.0 934.3 M810.0 942 L821.0 934.3 M826.0 942 L837.0 934.3 M842.0 942 L853.0 934.3 M858.0 942 L869.0 934.3 M874.0 942 L885.0 934.3 M890.0 942 L901.0 934.3 M906.0 942 L917.0 934.3 M922.0 942 L933.0 934.3 M938.0 942 L949.0 934.3 M954.0 942 L965.0 934.3 M970.0 942 L981.0 934.3 M986.0 942 L997.0 934.3 M1002.0 942 L1013.0 934.3 M1018.0 942 L1029.0 934.3 M1034.0 942 L1045.0 934.3 M1050.0 942 L1061.0 934.3 M1066.0 942 L1077.0 934.3 M1082.0 942 L1093.0 934.3 M1098.0 942 L1109.0 934.3 M1114.0 942 L1125.0 934.3 M1130.0 942 L1141.0 934.3 M1146.0 942 L1157.0 934.3 M1162.0 942 L1173.0 934.3 M1178.0 942 L1189.0 934.3 M1194.0 942 L1205.0 934.3 M1210.0 942 L1221.0 934.3 M1226.0 942 L1237.0 934.3 M1242.0 942 L1253.0 934.3 M1258.0 942 L1269.0 934.3 M1274.0 942 L1285.0 934.3 M1290.0 942 L1301.0 934.3 M1306.0 942 L1317.0 934.3 M1322.0 942 L1333.0 934.3 M371.8 942.0 L382.8 934.3 M372.0 930.7 L383.0 923.0 M372.1 919.4 L383.1 911.7 M372.3 908.1 L383.3 900.4 M372.5 896.8 L383.5 889.1 M372.7 885.5 L383.7 877.8 M372.8 874.2 L383.8 866.5 M373.0 862.9 L384.0 855.2 M373.2 851.6 L384.2 843.9 M373.4 840.3 L384.4 832.6 M373.5 829.0 L384.5 821.3 M373.7 817.7 L384.7 810.0 M373.9 806.4 L384.9 798.7 M374.1 795.1 L385.1 787.4 M374.2 783.8 L385.2 776.1 M374.4 772.5 L385.4 764.8 M374.6 761.2 L385.6 753.5 M374.8 749.9 L385.8 742.2 M374.9 738.6 L385.9 730.9 M375.1 727.3 L386.1 719.6 M375.3 716.0 L386.3 708.3 M375.4 704.7 L386.4 697.0 M375.6 693.4 L386.6 685.7 M375.8 682.1 L386.8 674.4 M376.0 670.8 L387.0 663.1 M376.1 659.5 L387.1 651.8 M376.3 648.2 L387.3 640.5 M376.5 636.9 L387.5 629.2 M376.7 625.6 L387.7 617.9 M376.8 614.3 L387.8 606.6 M377.0 603.0 L388.0 595.3 M377.2 591.7 L388.2 584.0 M377.4 580.4 L388.4 572.7 M377.5 569.1 L388.5 561.4 M377.7 557.8 L388.7 550.1 M377.9 546.5 L388.9 538.8 M378.1 535.2 L389.1 527.5 M378.2 523.9 L389.2 516.2 M378.4 512.6 L389.4 504.9 M378.6 501.3 L389.6 493.6 M378.7 490.0 L389.7 482.3 M378.9 478.7 L389.9 471.0 M379.1 467.4 L390.1 459.7 M379.3 456.1 L390.3 448.4 M379.4 444.8 L390.4 437.1 M379.6 433.5 L390.6 425.8 M379.8 422.2 L390.8 414.5 M380.0 410.9 L391.0 403.2 M380.1 399.6 L391.1 391.9 M380.3 388.3 L391.3 380.6 M380.5 377.0 L391.5 369.3 M380.7 365.7 L391.7 358.0 M380.8 354.4 L391.8 346.7 M381.0 343.1 L392.0 335.4 M381.2 331.8 L392.2 324.1 M381.4 320.5 L392.4 312.8 M381.5 309.2 L392.5 301.5 M381.7 297.9 L392.7 290.2 M1327.3 942.0 L1338.3 934.3 M1327.3 930.7 L1338.3 923.0 M1327.3 919.4 L1338.3 911.7 M1327.3 908.1 L1338.3 900.4 M1327.3 896.8 L1338.3 889.1 M1327.3 885.5 L1338.3 877.8 M1327.3 874.2 L1338.3 866.5 M1327.3 862.9 L1338.3 855.2 M1327.3 851.6 L1338.3 843.9 M1327.3 840.3 L1338.3 832.6 M1327.3 829.0 L1338.3 821.3 M1327.3 817.7 L1338.3 810.0 M1327.3 806.4 L1338.3 798.7 M1327.3 795.1 L1338.3 787.4 M1327.3 783.8 L1338.3 776.1 M1327.3 772.5 L1338.3 764.8 M1327.3 761.2 L1338.3 753.5 M1327.3 749.9 L1338.3 742.2 M1327.3 738.6 L1338.3 730.9 M1327.3 727.3 L1338.3 719.6 M1327.3 716.0 L1338.3 708.3 M1327.3 704.7 L1338.3 697.0 M1327.3 693.4 L1338.3 685.7 M1327.3 682.1 L1338.3 674.4 M1327.3 670.8 L1338.3 663.1 M1327.3 659.5 L1338.3 651.8 M1327.3 648.2 L1338.3 640.5 M1327.3 636.9 L1338.3 629.2 M1327.3 625.6 L1338.3 617.9 M1327.3 614.3 L1338.3 606.6 M1327.3 603.0 L1338.3 595.3 M1327.3 591.7 L1338.3 584.0 M1327.3 580.4 L1338.3 572.7 M1327.3 569.1 L1338.3 561.4 M1327.3 557.8 L1338.3 550.1 M1327.3 546.5 L1338.3 538.8 M1327.3 535.2 L1338.3 527.5 M1327.3 523.9 L1338.3 516.2 M1327.3 512.6 L1338.3 504.9 M1327.3 501.3 L1338.3 493.6 M1327.3 490.0 L1338.3 482.3 M1327.3 478.7 L1338.3 471.0 M1327.3 467.4 L1338.3 459.7 M1327.3 456.1 L1338.3 448.4 M1327.3 444.8 L1338.3 437.1 M1327.3 433.5 L1338.3 425.8 M1327.3 422.2 L1338.3 414.5 M1327.3 410.9 L1338.3 403.2 M1327.3 399.6 L1338.3 391.9 M1327.3 388.3 L1338.3 380.6 M1327.3 377.0 L1338.3 369.3 M1327.3 365.7 L1338.3 358.0 M1327.3 354.4 L1338.3 346.7 M1327.3 343.1 L1338.3 335.4 M1327.3 331.8 L1338.3 324.1 M1327.3 320.5 L1338.3 312.8 M1327.3 309.2 L1338.3 301.5 M1327.3 297.9 L1338.3 290.2" fill="none" stroke="#c83434" stroke-width="1.1"/>
<g fill="none" stroke="#c83434" stroke-width="3.8" stroke-linejoin="round" stroke-linecap="round"><polyline points="688.4,405 688.4,362 684.5,358.2 472.5,358.2 461.5,369.2 461.5,695 483.5,717.3 1104,717.3 1104,696.5"/><polyline points="516.5,405 516.5,436 766.5,686 1042,686 1048.3,679.7 1048.3,649.5"/><polyline points="1088.3,405.3 1029,405.3 1024,410.3 1024,460"/><polyline points="1023.5,526 1102,526"/><polyline points="1102,463 1197.5,463 1202.3,458.2 1202.3,405"/><polyline points="1169.5,463 1169.5,572 989.5,572 956,538.5"/><polyline points="888.5,537.5 956,537.5"/><polyline points="922.4,537.5 922.4,626 927.4,631.3 1054.2,631.3 1066.4,619 1066.4,613"/><polyline points="1084.6,613 1102.4,631.3"/><polyline points="956,613 1259.4,613"/><polyline points="1048.3,613 1048.3,602 1057.5,593.4 1137,593.4 1137,613"/><polyline points="888.5,604 888.5,637.5 900.5,649.5 1030.3,649.5"/><polyline points="1259.4,405 1259.4,749.5 1248,761.3 1158,761.3"/><polyline points="821.6,751.7 821.6,795.8 833.3,807.5 1227,807.5 1227,761.3"/><polyline points="1066.4,649.5 1066.4,683 1080,696.5 1158,696.5"/></g>
<rect x="1004.00" y="447.50" width="39.00" height="25.00" rx="6" fill="#c83434"/>
<rect x="999.50" y="443.00" width="48.00" height="34.00" rx="10" fill="none" stroke="#d83c3c" stroke-width="1"/>
<rect x="1004.00" y="514.00" width="39.00" height="25.00" rx="6" fill="#c83434"/>
<rect x="999.50" y="509.50" width="48.00" height="34.00" rx="10" fill="none" stroke="#d83c3c" stroke-width="1"/>
<rect x="1082.25" y="449.25" width="39.50" height="27.50" rx="6" fill="#c83434"/>
<rect x="1077.75" y="444.75" width="48.50" height="36.50" rx="10" fill="none" stroke="#d83c3c" stroke-width="1"/>
<rect x="1082.25" y="511.75" width="39.50" height="27.50" rx="6" fill="#c83434"/>
<rect x="1077.75" y="507.25" width="48.50" height="36.50" rx="10" fill="none" stroke="#d83c3c" stroke-width="1"/>
<rect x="868.00" y="524.85" width="41.00" height="25.50" rx="6" fill="#c83434"/>
<rect x="863.50" y="520.35" width="50.00" height="34.50" rx="10" fill="none" stroke="#d83c3c" stroke-width="1"/>
<rect x="936.00" y="525.75" width="40.00" height="25.50" rx="6" fill="#c83434"/>
<rect x="931.50" y="521.25" width="49.00" height="34.50" rx="10" fill="none" stroke="#d83c3c" stroke-width="1"/>
<rect x="868.00" y="590.75" width="41.00" height="26.50" rx="6" fill="#c83434"/>
<rect x="863.50" y="586.25" width="50.00" height="35.50" rx="10" fill="none" stroke="#d83c3c" stroke-width="1"/>
<rect x="936.00" y="592.00" width="40.00" height="26.00" rx="6" fill="#c83434"/>
<rect x="931.50" y="587.50" width="49.00" height="35.00" rx="10" fill="none" stroke="#d83c3c" stroke-width="1"/>
<rect x="802.10" y="673.25" width="39.00" height="24.50" rx="6" fill="#c83434"/>
<rect x="797.60" y="668.75" width="48.00" height="33.50" rx="10" fill="none" stroke="#d83c3c" stroke-width="1"/>
<rect x="802.10" y="739.45" width="39.00" height="24.50" rx="6" fill="#c83434"/>
<rect x="797.60" y="734.95" width="48.00" height="33.50" rx="10" fill="none" stroke="#d83c3c" stroke-width="1"/>
<rect x="1138.75" y="684.20" width="38.50" height="25.00" rx="6" fill="#c83434"/>
<rect x="1134.25" y="679.70" width="47.50" height="34.00" rx="10" fill="none" stroke="#d83c3c" stroke-width="1"/>
<rect x="1138.75" y="749.50" width="38.50" height="25.00" rx="6" fill="#c83434"/>
<rect x="1134.25" y="745.00" width="47.50" height="34.00" rx="10" fill="none" stroke="#d83c3c" stroke-width="1"/>
<text x="1023.5" y="458.5" font-family="Liberation Mono" font-size="11.5" fill="#e8d6d6" text-anchor="middle">1</text>
<text x="1023.5" y="467.5" font-family="Liberation Mono" font-size="5.5" fill="#e8d6d6" text-anchor="middle" textLength="36" lengthAdjust="spacingAndGlyphs">Net-(U1-IO18)</text>
<text x="1023.5" y="525.0" font-family="Liberation Mono" font-size="11.5" fill="#e8d6d6" text-anchor="middle">2</text>
<text x="1023.5" y="534.0" font-family="Liberation Mono" font-size="5.5" fill="#e8d6d6" text-anchor="middle" textLength="36" lengthAdjust="spacingAndGlyphs">Net-(D1-A)</text>
<text x="1102" y="460.5" font-family="Liberation Mono" font-size="11.5" fill="#e8d6d6" text-anchor="middle">1</text>
<text x="1102" y="473" font-family="Liberation Mono" font-size="12" fill="#e8d6d6" text-anchor="middle" textLength="21" lengthAdjust="spacingAndGlyphs">GND</text>
<text x="1102" y="524.0" font-family="Liberation Mono" font-size="11.5" fill="#e8d6d6" text-anchor="middle">2</text>
<text x="1102" y="533.0" font-family="Liberation Mono" font-size="5.5" fill="#e8d6d6" text-anchor="middle" textLength="36.5" lengthAdjust="spacingAndGlyphs">Net-(D1-A)</text>
<text x="888.5" y="535.1" font-family="Liberation Mono" font-size="11.5" fill="#e8d6d6" text-anchor="middle">2</text>
<text x="888.5" y="547.6" font-family="Liberation Mono" font-size="12" fill="#e8d6d6" text-anchor="middle" textLength="21" lengthAdjust="spacingAndGlyphs">GND</text>
<text x="956" y="536.0" font-family="Liberation Mono" font-size="11.5" fill="#e8d6d6" text-anchor="middle">2</text>
<text x="956" y="548.5" font-family="Liberation Mono" font-size="12" fill="#e8d6d6" text-anchor="middle" textLength="21" lengthAdjust="spacingAndGlyphs">GND</text>
<text x="888.5" y="601.5" font-family="Liberation Mono" font-size="11.5" fill="#e8d6d6" text-anchor="middle">1</text>
<text x="888.5" y="614" font-family="Liberation Mono" font-size="12" fill="#e8d6d6" text-anchor="middle" textLength="34" lengthAdjust="spacingAndGlyphs">+3.3V</text>
<text x="956" y="602.5" font-family="Liberation Mono" font-size="11.5" fill="#e8d6d6" text-anchor="middle">1</text>
<text x="956" y="615" font-family="Liberation Mono" font-size="12" fill="#e8d6d6" text-anchor="middle" textLength="34" lengthAdjust="spacingAndGlyphs">+3.3V</text>
<text x="821.6" y="684.0" font-family="Liberation Mono" font-size="11.5" fill="#e8d6d6" text-anchor="middle">2</text>
<text x="821.6" y="693.0" font-family="Liberation Mono" font-size="5.5" fill="#e8d6d6" text-anchor="middle" textLength="36" lengthAdjust="spacingAndGlyphs">Net-(U1-IO0)</text>
<text x="821.6" y="749.2" font-family="Liberation Mono" font-size="11.5" fill="#e8d6d6" text-anchor="middle">1</text>
<text x="821.6" y="761.7" font-family="Liberation Mono" font-size="12" fill="#e8d6d6" text-anchor="middle" textLength="34" lengthAdjust="spacingAndGlyphs">+3.3V</text>
<text x="1158" y="695.2" font-family="Liberation Mono" font-size="11.5" fill="#e8d6d6" text-anchor="middle">2</text>
<text x="1158" y="704.2" font-family="Liberation Mono" font-size="5.5" fill="#e8d6d6" text-anchor="middle" textLength="35.5" lengthAdjust="spacingAndGlyphs">Net-(U1-IO4)</text>
<text x="1158" y="759.5" font-family="Liberation Mono" font-size="11.5" fill="#e8d6d6" text-anchor="middle">1</text>
<text x="1158" y="772" font-family="Liberation Mono" font-size="12" fill="#e8d6d6" text-anchor="middle" textLength="34" lengthAdjust="spacingAndGlyphs">+3.3V</text>
<rect x="1024.30" y="608.25" width="12.00" height="10.50" rx="3.5" fill="#c83434"/>
<rect x="1020.80" y="604.25" width="19.00" height="18.50" rx="8" fill="none" stroke="#d83c3c" stroke-width="1"/>
<text x="1030.3" y="613.0" font-family="Liberation Mono" font-size="5.5" fill="#e8d6d6" text-anchor="middle">1</text>
<rect x="1042.30" y="608.25" width="12.00" height="10.50" rx="3.5" fill="#c83434"/>
<rect x="1038.80" y="604.25" width="19.00" height="18.50" rx="8" fill="none" stroke="#d83c3c" stroke-width="1"/>
<text x="1048.3" y="613.0" font-family="Liberation Mono" font-size="5.5" fill="#e8d6d6" text-anchor="middle">2</text>
<rect x="1060.40" y="608.25" width="12.00" height="10.50" rx="3.5" fill="#c83434"/>
<rect x="1056.90" y="604.25" width="19.00" height="18.50" rx="8" fill="none" stroke="#d83c3c" stroke-width="1"/>
<text x="1066.4" y="613.0" font-family="Liberation Mono" font-size="5.5" fill="#e8d6d6" text-anchor="middle">3</text>
<rect x="1078.60" y="608.25" width="12.00" height="10.50" rx="3.5" fill="#c83434"/>
<rect x="1075.10" y="604.25" width="19.00" height="18.50" rx="8" fill="none" stroke="#d83c3c" stroke-width="1"/>
<text x="1084.6" y="613.0" font-family="Liberation Mono" font-size="5.5" fill="#e8d6d6" text-anchor="middle">4</text>
<rect x="1096.40" y="608.25" width="12.00" height="10.50" rx="3.5" fill="#c83434"/>
<rect x="1092.90" y="604.25" width="19.00" height="18.50" rx="8" fill="none" stroke="#d83c3c" stroke-width="1"/>
<text x="1102.4" y="613.0" font-family="Liberation Mono" font-size="5.5" fill="#e8d6d6" text-anchor="middle">5</text>
<rect x="1096.40" y="626.05" width="12.00" height="10.50" rx="3.5" fill="#c83434"/>
<rect x="1092.90" y="622.05" width="19.00" height="18.50" rx="8" fill="none" stroke="#d83c3c" stroke-width="1"/>
<text x="1102.4" y="630.8" font-family="Liberation Mono" font-size="5.5" fill="#e8d6d6" text-anchor="middle">6</text>
<rect x="1096.40" y="644.25" width="12.00" height="10.50" rx="3.5" fill="#c83434"/>
<rect x="1092.90" y="640.25" width="19.00" height="18.50" rx="8" fill="none" stroke="#d83c3c" stroke-width="1"/>
<text x="1102.4" y="649.0" font-family="Liberation Mono" font-size="5.5" fill="#e8d6d6" text-anchor="middle">7</text>
<rect x="1078.60" y="644.25" width="12.00" height="10.50" rx="3.5" fill="#c83434"/>
<rect x="1075.10" y="640.25" width="19.00" height="18.50" rx="8" fill="none" stroke="#d83c3c" stroke-width="1"/>
<text x="1084.6" y="649.0" font-family="Liberation Mono" font-size="5.5" fill="#e8d6d6" text-anchor="middle">8</text>
<rect x="1060.40" y="644.25" width="12.00" height="10.50" rx="3.5" fill="#c83434"/>
<rect x="1056.90" y="640.25" width="19.00" height="18.50" rx="8" fill="none" stroke="#d83c3c" stroke-width="1"/>
<text x="1066.4" y="649.0" font-family="Liberation Mono" font-size="5.5" fill="#e8d6d6" text-anchor="middle">9</text>
<rect x="1042.30" y="644.25" width="12.00" height="10.50" rx="3.5" fill="#c83434"/>
<rect x="1038.80" y="640.25" width="19.00" height="18.50" rx="8" fill="none" stroke="#d83c3c" stroke-width="1"/>
<text x="1048.3" y="649.0" font-family="Liberation Mono" font-size="5.5" fill="#e8d6d6" text-anchor="middle">10</text>
<rect x="1024.30" y="644.25" width="12.00" height="10.50" rx="3.5" fill="#c83434"/>
<rect x="1020.80" y="640.25" width="19.00" height="18.50" rx="8" fill="none" stroke="#d83c3c" stroke-width="1"/>
<text x="1030.3" y="649.0" font-family="Liberation Mono" font-size="5.5" fill="#e8d6d6" text-anchor="middle">11</text>
<rect x="1024.30" y="626.05" width="12.00" height="10.50" rx="3.5" fill="#c83434"/>
<rect x="1020.80" y="622.05" width="19.00" height="18.50" rx="8" fill="none" stroke="#d83c3c" stroke-width="1"/>
<text x="1030.3" y="630.8" font-family="Liberation Mono" font-size="5.5" fill="#e8d6d6" text-anchor="middle">12</text>
<circle cx="516.5" cy="405.3" r="17" fill="#c83434"/>
<circle cx="516.5" cy="405.3" r="20.8" fill="none" stroke="#d83c3c" stroke-width="1"/>
<circle cx="516.5" cy="405.3" r="10.8" fill="#001023" stroke="#d8c830" stroke-width="1"/>
<text x="516.5" y="402.8" font-family="Liberation Mono" font-size="16" fill="#c8ccd8" text-anchor="middle" textLength="26" lengthAdjust="spacingAndGlyphs" opacity="0.9">D22</text>
<text x="516.5" y="411.3" font-family="Liberation Mono" font-size="5" fill="#e0d0d0" text-anchor="middle" textLength="28" lengthAdjust="spacingAndGlyphs">Net-(U1-IO0)</text>
<circle cx="688.4" cy="405.3" r="17" fill="#c83434"/>
<circle cx="688.4" cy="405.3" r="20.8" fill="none" stroke="#d83c3c" stroke-width="1"/>
<circle cx="688.4" cy="405.3" r="10.8" fill="#001023" stroke="#d8c830" stroke-width="1"/>
<text x="688.4" y="402.8" font-family="Liberation Mono" font-size="16" fill="#c8ccd8" text-anchor="middle" textLength="26" lengthAdjust="spacingAndGlyphs" opacity="0.9">D21</text>
<text x="688.4" y="411.3" font-family="Liberation Mono" font-size="5" fill="#e0d0d0" text-anchor="middle" textLength="28" lengthAdjust="spacingAndGlyphs">Net-(U1-IO4)</text>
<circle cx="1088.3" cy="405.3" r="17" fill="#c83434"/>
<circle cx="1088.3" cy="405.3" r="20.8" fill="none" stroke="#d83c3c" stroke-width="1"/>
<circle cx="1088.3" cy="405.3" r="10.8" fill="#001023" stroke="#d8c830" stroke-width="1"/>
<text x="1088.3" y="402.8" font-family="Liberation Mono" font-size="16" fill="#c8ccd8" text-anchor="middle" textLength="17" lengthAdjust="spacingAndGlyphs" opacity="0.9">D2</text>
<text x="1088.3" y="411.3" font-family="Liberation Mono" font-size="5" fill="#e0d0d0" text-anchor="middle" textLength="28" lengthAdjust="spacingAndGlyphs">Net-(U1-IO18)</text>
<circle cx="1202.3" cy="404.8" r="17" fill="#c83434"/>
<circle cx="1202.3" cy="404.8" r="20.8" fill="none" stroke="#d83c3c" stroke-width="1"/>
<circle cx="1202.3" cy="404.8" r="10.8" fill="#001023" stroke="#d8c830" stroke-width="1"/>
<text x="1202.3" y="402.3" font-family="Liberation Mono" font-size="16" fill="#c8ccd8" text-anchor="middle" textLength="17" lengthAdjust="spacingAndGlyphs" opacity="0.9">17</text>
<text x="1202.3" y="415.8" font-family="Liberation Mono" font-size="11" fill="#d8d0d8" text-anchor="middle" textLength="22" lengthAdjust="spacingAndGlyphs" opacity="0.85">GND</text>
<circle cx="1259.4" cy="404.8" r="17" fill="#c83434"/>
<circle cx="1259.4" cy="404.8" r="20.8" fill="none" stroke="#d83c3c" stroke-width="1"/>
<circle cx="1259.4" cy="404.8" r="10.8" fill="#001023" stroke="#d8c830" stroke-width="1"/>
<text x="1259.4" y="402.3" font-family="Liberation Mono" font-size="16" fill="#c8ccd8" text-anchor="middle" textLength="17" lengthAdjust="spacingAndGlyphs" opacity="0.9">16</text>
<text x="1259.4" y="415.8" font-family="Liberation Mono" font-size="11" fill="#d8d0d8" text-anchor="middle" textLength="28" lengthAdjust="spacingAndGlyphs" opacity="0.85">+3.3V</text>
<g fill="none" stroke="#3f2062" stroke-width="1"><rect x="999" y="442" width="50" height="103"/><rect x="1076" y="442" width="53" height="105"/><rect x="863" y="519" width="51" height="104"/><rect x="930" y="520" width="52" height="104"/><rect x="796" y="667" width="51" height="104"/><rect x="1133" y="678" width="50" height="104"/><rect x="1008" y="598.6" width="119.6" height="67"/></g>
<path d="M883.0 571 H894.0 M888.5 565.5 V576.5" stroke="#e838c0" stroke-width="1.1"/>
<path d="M950.5 572 H961.5 M956 566.5 V577.5" stroke="#e838c0" stroke-width="1.1"/>
<path d="M1017.5 492 H1028.5 M1023 486.5 V497.5" stroke="#e838c0" stroke-width="1.1"/>
<path d="M1096.5 493 H1107.5 M1102 487.5 V498.5" stroke="#e838c0" stroke-width="1.1"/>
<path d="M816.1 718 H827.1 M821.6 712.5 V723.5" stroke="#e838c0" stroke-width="1.1"/>
<path d="M1152.9 729.3 H1163.9 M1158.4 723.8 V734.8" stroke="#e838c0" stroke-width="1.1"/>
<path d="M1060.9 631.3 H1071.9 M1066.4 625.8 V636.8" stroke="#e838c0" stroke-width="1.1"/>
<path d="M453.9 919.5 H464.9 M459.4 914.0 V925.0" stroke="#e838c0" stroke-width="1.1"/>
<line x1="1029.3" y1="616" x2="1029.3" y2="649.5" stroke="#3fb0c0" stroke-width="1"/>
<path d="M229 424.5 H308 M269.5 384 V464" stroke="#c8c8c8" stroke-width="1"/>
<text x="764" y="385.2" font-family="Liberation Sans" font-weight="bold" font-size="40" fill="#c83434" textLength="193" lengthAdjust="spacingAndGlyphs">This looks</text>
<text x="766" y="442" font-family="Liberation Sans" font-weight="bold" font-size="40" fill="#c83434" textLength="193" lengthAdjust="spacingAndGlyphs">so ugly lol</text>
</svg>
<div class="a" style="left:1665px;top:142px;width:5px;height:929px;background:#dadada"></div>
<div class="a" style="left:1670px;top:142px;width:250px;height:929px;background:#f0f0f0"></div>
<div class="a" style="left:1670px;top:142px;width:250px;height:25.5px;background:#bdbdbd"></div>
<div class="a" style="left:1674px;top:146px;font-size:14.5px;color:#111">Appearance</div>
<div class="a" style="left:1671px;top:200px;width:246px;height:487px;background:#f3f3f3;border:1px solid #dcdcdc"></div>
<div class="a" style="left:1671px;top:173.5px;width:62px;height:28px;background:#f9f9f9;border:1px solid #dcdcdc;border-bottom:none"></div>
<div class="a" style="left:1733px;top:176px;width:60.5px;height:24.5px;background:#f0f0f0;border:1px solid #dcdcdc;border-bottom:none"></div>
<div class="a" style="left:1793.5px;top:176px;width:57.5px;height:24.5px;background:#f0f0f0;border:1px solid #dcdcdc;border-bottom:none"></div>
<div class="a" style="left:1678px;top:178px;font-size:14px">Layers</div>
<div class="a" style="left:1738px;top:180.5px;font-size:14.5px">Objects</div>
<div class="a" style="left:1800px;top:180.5px;font-size:14.5px">Nets</div>
<div class="a" style="left:1674px;top:202px;width:221px;height:484px;background:#f0f0f0"></div>
<div class="a" style="left:1674px;top:202.5px;width:221px;height:19.5px;background:#dcdcdc"></div>
<svg style="position:absolute;left:1680px;top:206px" width="8" height="12" viewBox="0 0 8 12"><path d="M0.5 0.5 L7 6 L0.5 11.5 Z" fill="#4040ff"/></svg>
<div class="lay" style="top:203px"><div class="sw" style="background:#c83434"></div><svg style="position:absolute;left:41px;top:2px" width="17" height="17" viewBox="0 0 17 17"><circle cx="8.5" cy="8.5" r="8.3" fill="#4d4d4d"/><path d="M2.5 8.5 Q8.5 2.8 14.5 8.5 Q8.5 14.2 2.5 8.5 Z" fill="#fff"/><circle cx="8.5" cy="8.5" r="2.3" fill="#4d4d4d"/><circle cx="8.5" cy="8.5" r="1" fill="#fff"/></svg><div class="t">F.Cu</div></div>
<div class="lay" style="top:223px"><div class="sw" style="background:#4d7fc4"></div><svg style="position:absolute;left:41px;top:2px" width="17" height="17" viewBox="0 0 17 17"><circle cx="8.5" cy="8.5" r="8.3" fill="#4d4d4d"/><path d="M2.5 8.5 Q8.5 2.8 14.5 8.5 Q8.5 14.2 2.5 8.5 Z" fill="#fff"/><circle cx="8.5" cy="8.5" r="2.3" fill="#4d4d4d"/><circle cx="8.5" cy="8.5" r="1" fill="#fff"/></svg><div class="t">B.Cu</div></div>
<div class="lay" style="top:243px"><div class="sw" style="background:#840084"></div><svg style="position:absolute;left:41px;top:2px" width="17" height="17" viewBox="0 0 17 17"><circle cx="8.5" cy="8.5" r="8.3" fill="#4d4d4d"/><path d="M2.5 8.5 Q8.5 2.8 14.5 8.5 Q8.5 14.2 2.5 8.5 Z" fill="#fff"/><circle cx="8.5" cy="8.5" r="2.3" fill="#4d4d4d"/><circle cx="8.5" cy="8.5" r="1" fill="#fff"/></svg><div class="t">F.Adhesive</div></div>
<div class="lay" style="top:263px"><div class="sw" style="background:#000084"></div><svg style="position:absolute;left:41px;top:2px" width="17" height="17" viewBox="0 0 17 17"><circle cx="8.5" cy="8.5" r="8.3" fill="#4d4d4d"/><path d="M2.5 8.5 Q8.5 2.8 14.5 8.5 Q8.5 14.2 2.5 8.5 Z" fill="#fff"/><circle cx="8.5" cy="8.5" r="2.3" fill="#4d4d4d"/><circle cx="8.5" cy="8.5" r="1" fill="#fff"/></svg><div class="t">B.Adhesive</div></div>
<div class="lay" style="top:283px"><div class="sw" style="background:#a39490"></div><svg style="position:absolute;left:41px;top:2px" width="17" height="17" viewBox="0 0 17 17"><circle cx="8.5" cy="8.5" r="8.3" fill="#4d4d4d"/><path d="M2.5 8.5 Q8.5 2.8 14.5 8.5 Q8.5 14.2 2.5 8.5 Z" fill="#fff"/><circle cx="8.5" cy="8.5" r="2.3" fill="#4d4d4d"/><circle cx="8.5" cy="8.5" r="1" fill="#fff"/></svg><div class="t">F.Paste</div></div>
<div class="lay" style="top:303px"><div class="sw" style="background:#00b4b4"></div><svg style="position:absolute;left:41px;top:2px" width="17" height="17" viewBox="0 0 17 17"><circle cx="8.5" cy="8.5" r="8.3" fill="#4d4d4d"/><path d="M2.5 8.5 Q8.5 2.8 14.5 8.5 Q8.5 14.2 2.5 8.5 Z" fill="#fff"/><circle cx="8.5" cy="8.5" r="2.3" fill="#4d4d4d"/><circle cx="8.5" cy="8.5" r="1" fill="#fff"/></svg><div class="t">B.Paste</div></div>
<div class="lay" style="top:323px"><div class="sw" style="background:#f2eda1"></div><svg style="position:absolute;left:41px;top:2px" width="17" height="17" viewBox="0 0 17 17"><circle cx="8.5" cy="8.5" r="8.3" fill="#4d4d4d"/><path d="M2.5 8.5 Q8.5 2.8 14.5 8.5 Q8.5 14.2 2.5 8.5 Z" fill="#fff"/><circle cx="8.5" cy="8.5" r="2.3" fill="#4d4d4d"/><circle cx="8.5" cy="8.5" r="1" fill="#fff"/></svg><div class="t">F.Silkscreen</div></div>
<div class="lay" style="top:343px"><div class="sw" style="background:#e8b2a7"></div><svg style="position:absolute;left:41px;top:2px" width="17" height="17" viewBox="0 0 17 17"><circle cx="8.5" cy="8.5" r="8.3" fill="#4d4d4d"/><path d="M2.5 8.5 Q8.5 2.8 14.5 8.5 Q8.5 14.2 2.5 8.5 Z" fill="#fff"/><circle cx="8.5" cy="8.5" r="2.3" fill="#4d4d4d"/><circle cx="8.5" cy="8.5" r="1" fill="#fff"/></svg><div class="t">B.Silkscreen</div></div>
<div class="lay" style="top:363px"><svg class="sw" style="position:absolute;left:19px;top:2.5px" width="16" height="15"><rect width="16" height="15" fill="#6a3a86"/><rect width="5" height="5" x="0" y="0" fill="#4a2068"/><rect width="5" height="5" x="10" y="0" fill="#4a2068"/><rect width="5" height="5" x="5" y="5" fill="#4a2068"/><rect width="5" height="5" x="0" y="10" fill="#4a2068"/><rect width="5" height="5" x="10" y="10" fill="#4a2068"/></svg><svg style="position:absolute;left:41px;top:2px" width="17" height="17" viewBox="0 0 17 17"><circle cx="8.5" cy="8.5" r="8.3" fill="#4d4d4d"/><path d="M2.5 8.5 Q8.5 2.8 14.5 8.5 Q8.5 14.2 2.5 8.5 Z" fill="#fff"/><circle cx="8.5" cy="8.5" r="2.3" fill="#4d4d4d"/><circle cx="8.5" cy="8.5" r="1" fill="#fff"/></svg><div class="t">F.Mask</div></div>
<div class="lay" style="top:383px"><svg class="sw" style="position:absolute;left:19px;top:2.5px" width="16" height="15"><rect width="16" height="15" fill="#1a7a6a"/><rect width="5" height="5" x="0" y="0" fill="#0a5a4a"/><rect width="5" height="5" x="10" y="0" fill="#0a5a4a"/><rect width="5" height="5" x="5" y="5" fill="#0a5a4a"/><rect width="5" height="5" x="0" y="10" fill="#0a5a4a"/><rect width="5" height="5" x="10" y="10" fill="#0a5a4a"/></svg><svg style="position:absolute;left:41px;top:2px" width="17" height="17" viewBox="0 0 17 17"><circle cx="8.5" cy="8.5" r="8.3" fill="#4d4d4d"/><path d="M2.5 8.5 Q8.5 2.8 14.5 8.5 Q8.5 14.2 2.5 8.5 Z" fill="#fff"/><circle cx="8.5" cy="8.5" r="2.3" fill="#4d4d4d"/><circle cx="8.5" cy="8.5" r="1" fill="#fff"/></svg><div class="t">B.Mask</div></div>
<div class="lay" style="top:403px"><div class="sw" style="background:#c2c2c2"></div><svg style="position:absolute;left:41px;top:2px" width="17" height="17" viewBox="0 0 17 17"><circle cx="8.5" cy="8.5" r="8.3" fill="#4d4d4d"/><path d="M2.5 8.5 Q8.5 2.8 14.5 8.5 Q8.5 14.2 2.5 8.5 Z" fill="#fff"/><circle cx="8.5" cy="8.5" r="2.3" fill="#4d4d4d"/><circle cx="8.5" cy="8.5" r="1" fill="#fff"/></svg><div class="t">User.Drawings</div></div>
<div class="lay" style="top:423px"><div class="sw" style="background:#5994dc"></div><svg style="position:absolute;left:41px;top:2px" width="17" height="17" viewBox="0 0 17 17"><circle cx="8.5" cy="8.5" r="8.3" fill="#4d4d4d"/><path d="M2.5 8.5 Q8.5 2.8 14.5 8.5 Q8.5 14.2 2.5 8.5 Z" fill="#fff"/><circle cx="8.5" cy="8.5" r="2.3" fill="#4d4d4d"/><circle cx="8.5" cy="8.5" r="1" fill="#fff"/></svg><div class="t">User.Comments</div></div>
<div class="lay" style="top:443px"><div class="sw" style="background:#b4dbd2"></div><svg style="position:absolute;left:41px;top:2px" width="17" height="17" viewBox="0 0 17 17"><circle cx="8.5" cy="8.5" r="8.3" fill="#4d4d4d"/><path d="M2.5 8.5 Q8.5 2.8 14.5 8.5 Q8.5 14.2 2.5 8.5 Z" fill="#fff"/><circle cx="8.5" cy="8.5" r="2.3" fill="#4d4d4d"/><circle cx="8.5" cy="8.5" r="1" fill="#fff"/></svg><div class="t">User.Eco1</div></div>
<div class="lay" style="top:463px"><div class="sw" style="background:#d8c852"></div><svg style="position:absolute;left:41px;top:2px" width="17" height="17" viewBox="0 0 17 17"><circle cx="8.5" cy="8.5" r="8.3" fill="#4d4d4d"/><path d="M2.5 8.5 Q8.5 2.8 14.5 8.5 Q8.5 14.2 2.5 8.5 Z" fill="#fff"/><circle cx="8.5" cy="8.5" r="2.3" fill="#4d4d4d"/><circle cx="8.5" cy="8.5" r="1" fill="#fff"/></svg><div class="t">User.Eco2</div></div>
<div class="lay" style="top:483px"><div class="sw" style="background:#d0d2cd"></div><svg style="position:absolute;left:41px;top:2px" width="17" height="17" viewBox="0 0 17 17"><circle cx="8.5" cy="8.5" r="8.3" fill="#4d4d4d"/><path d="M2.5 8.5 Q8.5 2.8 14.5 8.5 Q8.5 14.2 2.5 8.5 Z" fill="#fff"/><circle cx="8.5" cy="8.5" r="2.3" fill="#4d4d4d"/><circle cx="8.5" cy="8.5" r="1" fill="#fff"/></svg><div class="t">Edge.Cuts</div></div>
<div class="lay" style="top:503px"><div class="sw" style="background:#ff26e2"></div><svg style="position:absolute;left:41px;top:2px" width="17" height="17" viewBox="0 0 17 17"><circle cx="8.5" cy="8.5" r="8.3" fill="#4d4d4d"/><path d="M2.5 8.5 Q8.5 2.8 14.5 8.5 Q8.5 14.2 2.5 8.5 Z" fill="#fff"/><circle cx="8.5" cy="8.5" r="2.3" fill="#4d4d4d"/><circle cx="8.5" cy="8.5" r="1" fill="#fff"/></svg><div class="t">Margin</div></div>
<div class="lay" style="top:523px"><div class="sw" style="background:#ff26e2"></div><svg style="position:absolute;left:41px;top:2px" width="17" height="17" viewBox="0 0 17 17"><circle cx="8.5" cy="8.5" r="8.3" fill="#4d4d4d"/><path d="M2.5 8.5 Q8.5 2.8 14.5 8.5 Q8.5 14.2 2.5 8.5 Z" fill="#fff"/><circle cx="8.5" cy="8.5" r="2.3" fill="#4d4d4d"/><circle cx="8.5" cy="8.5" r="1" fill="#fff"/></svg><div class="t">F.Courtyard</div></div>
<div class="lay" style="top:543px"><div class="sw" style="background:#26e9ff"></div><svg style="position:absolute;left:41px;top:2px" width="17" height="17" viewBox="0 0 17 17"><circle cx="8.5" cy="8.5" r="8.3" fill="#4d4d4d"/><path d="M2.5 8.5 Q8.5 2.8 14.5 8.5 Q8.5 14.2 2.5 8.5 Z" fill="#fff"/><circle cx="8.5" cy="8.5" r="2.3" fill="#4d4d4d"/><circle cx="8.5" cy="8.5" r="1" fill="#fff"/></svg><div class="t">B.Courtyard</div></div>
<div class="lay" style="top:563px"><div class="sw" style="background:#afafaf"></div><svg style="position:absolute;left:41px;top:2px" width="17" height="17" viewBox="0 0 17 17"><circle cx="8.5" cy="8.5" r="8.3" fill="#4d4d4d"/><path d="M2.5 8.5 Q8.5 2.8 14.5 8.5 Q8.5 14.2 2.5 8.5 Z" fill="#fff"/><circle cx="8.5" cy="8.5" r="2.3" fill="#4d4d4d"/><circle cx="8.5" cy="8.5" r="1" fill="#fff"/></svg><div class="t">F.Fab</div></div>
<div class="lay" style="top:583px"><div class="sw" style="background:#585d84"></div><svg style="position:absolute;left:41px;top:2px" width="17" height="17" viewBox="0 0 17 17"><circle cx="8.5" cy="8.5" r="8.3" fill="#4d4d4d"/><path d="M2.5 8.5 Q8.5 2.8 14.5 8.5 Q8.5 14.2 2.5 8.5 Z" fill="#fff"/><circle cx="8.5" cy="8.5" r="2.3" fill="#4d4d4d"/><circle cx="8.5" cy="8.5" r="1" fill="#fff"/></svg><div class="t">B.Fab</div></div>
<div class="lay" style="top:603px"><div class="sw" style="background:#c2c2c2"></div><svg style="position:absolute;left:41px;top:2px" width="17" height="17" viewBox="0 0 17 17"><circle cx="8.5" cy="8.5" r="8.3" fill="#4d4d4d"/><path d="M2.5 8.5 Q8.5 2.8 14.5 8.5 Q8.5 14.2 2.5 8.5 Z" fill="#fff"/><circle cx="8.5" cy="8.5" r="2.3" fill="#4d4d4d"/><circle cx="8.5" cy="8.5" r="1" fill="#fff"/></svg><div class="t">User.1</div></div>
<div class="lay" style="top:623px"><div class="sw" style="background:#5994dc"></div><svg style="position:absolute;left:41px;top:2px" width="17" height="17" viewBox="0 0 17 17"><circle cx="8.5" cy="8.5" r="8.3" fill="#4d4d4d"/><path d="M2.5 8.5 Q8.5 2.8 14.5 8.5 Q8.5 14.2 2.5 8.5 Z" fill="#fff"/><circle cx="8.5" cy="8.5" r="2.3" fill="#4d4d4d"/><circle cx="8.5" cy="8.5" r="1" fill="#fff"/></svg><div class="t">User.2</div></div>
<div class="lay" style="top:643px"><div class="sw" style="background:#b4dbd2"></div><svg style="position:absolute;left:41px;top:2px" width="17" height="17" viewBox="0 0 17 17"><circle cx="8.5" cy="8.5" r="8.3" fill="#4d4d4d"/><path d="M2.5 8.5 Q8.5 2.8 14.5 8.5 Q8.5 14.2 2.5 8.5 Z" fill="#fff"/><circle cx="8.5" cy="8.5" r="2.3" fill="#4d4d4d"/><circle cx="8.5" cy="8.5" r="1" fill="#fff"/></svg><div class="t">User.3</div></div>
<div class="lay" style="top:663px"><div class="sw" style="background:#d8c852"></div><svg style="position:absolute;left:41px;top:2px" width="17" height="17" viewBox="0 0 17 17"><circle cx="8.5" cy="8.5" r="8.3" fill="#4d4d4d"/><path d="M2.5 8.5 Q8.5 2.8 14.5 8.5 Q8.5 14.2 2.5 8.5 Z" fill="#fff"/><circle cx="8.5" cy="8.5" r="2.3" fill="#4d4d4d"/><circle cx="8.5" cy="8.5" r="1" fill="#fff"/></svg><div class="t">User.4</div></div>
<div class="a" style="left:1904px;top:223.5px;width:3px;height:436px;background:#858585;border-radius:1.5px"></div>
<div class="a" style="left:1670px;top:687px;width:250px;height:105px;background:#f0f0f0;border-top:1px solid #e0e0e0;border-bottom:1px solid #dedede"></div>
<div class="a" style="left:1679px;top:692px;width:232px;height:97.5px;background:#fafafa"></div>
<svg style="position:absolute;left:1683px;top:698px" width="10" height="7" viewBox="0 0 10 7"><path d="M0 0.5 H9.5 L4.75 6 Z" fill="#111"/></svg>
<div class="a" style="left:1695px;top:693.5px;font-size:13.4px">Layer Display Options</div>
<div class="a" style="left:1679px;top:719px;font-size:13.4px">Inactive layers (H):</div>
<svg style="position:absolute;left:1679px;top:740px" width="16" height="16" viewBox="0 0 16 16"><circle cx="8" cy="8" r="7.3" fill="#fdfdfd" stroke="#555" stroke-width="1"/></svg>
<div class="a" style="left:1698.5px;top:740px;font-size:13.4px">Normal</div>
<svg style="position:absolute;left:1770px;top:740px" width="16" height="16" viewBox="0 0 16 16"><circle cx="8" cy="8" r="7.5" fill="#0f5fbf"/><circle cx="8" cy="8" r="3.3" fill="#fff"/></svg>
<div class="a" style="left:1789.5px;top:740px;font-size:13.4px">Dim</div>
<svg style="position:absolute;left:1840.8px;top:740px" width="16" height="16" viewBox="0 0 16 16"><circle cx="8" cy="8" r="7.3" fill="#fdfdfd" stroke="#555" stroke-width="1"/></svg>
<div class="a" style="left:1860.3px;top:740px;font-size:13.4px">Hide</div>
<div class="a" style="left:1679px;top:762px;width:231px;height:1px;background:#a0a0a0"></div>
<svg style="position:absolute;left:1679px;top:769px" width="16" height="16" viewBox="0 0 16 16"><rect x="0.5" y="0.5" width="15" height="15" rx="3" fill="#fdfdfd" stroke="#555" stroke-width="1"/></svg>
<div class="a" style="left:1698px;top:769px;font-size:13.4px">Flip board view</div>
<div class="a" style="left:1677px;top:806px;font-size:13.4px">Presets (Ctrl+Tab):</div>
<div class="a" style="left:1677px;top:825px;width:235px;height:27px;background:#fdfdfd;border:1px solid #cfcfcf;border-radius:2px"></div>
<div class="a" style="left:1682px;top:831px;font-size:13.4px">---</div>
<svg style="position:absolute;left:1894px;top:834px" width="12" height="8" viewBox="0 0 12 8"><path d="M1.5 1.5 L6 6 L10.5 1.5" fill="none" stroke="#333" stroke-width="1.2"/></svg>
<div class="a" style="left:1677px;top:858px;font-size:13.4px">Viewports (Shift+Tab):</div>
<div class="a" style="left:1677px;top:877.5px;width:235px;height:27px;background:#fdfdfd;border:1px solid #cfcfcf;border-radius:2px"></div>
<div class="a" style="left:1682px;top:883.5px;font-size:13.4px">---</div>
<svg style="position:absolute;left:1894px;top:886.5px" width="12" height="8" viewBox="0 0 12 8"><path d="M1.5 1.5 L6 6 L10.5 1.5" fill="none" stroke="#333" stroke-width="1.2"/></svg>
<div class="a" style="left:1670px;top:911px;width:250px;height:5px;background:#e4e4e4"></div>
<div class="a" style="left:1670px;top:916px;width:250px;height:25.5px;background:#bdbdbd"></div>
<div class="a" style="left:1674px;top:920px;font-size:14.5px;color:#111">Selection Filter</div>
<svg style="position:absolute;left:1675px;top:949.5px" width="16" height="16" viewBox="0 0 16 16"><rect x="0" y="0" width="16" height="16" rx="3" fill="#0f5fbf"/><path d="M3.8 8.2 L6.6 11 L12.3 5.2" fill="none" stroke="#fff" stroke-width="1.3"/></svg>
<div class="a" style="left:1694px;top:949.0px;font-size:13.4px">All items</div>
<svg style="position:absolute;left:1780px;top:949.5px" width="16" height="16" viewBox="0 0 16 16"><rect x="0.5" y="0.5" width="15" height="15" rx="3" fill="#fdfdfd" stroke="#555" stroke-width="1"/></svg>
<div class="a" style="left:1799px;top:949.0px;font-size:13.4px">Locked items</div>
<svg style="position:absolute;left:1675px;top:969.5px" width="16" height="16" viewBox="0 0 16 16"><rect x="0" y="0" width="16" height="16" rx="3" fill="#0f5fbf"/><path d="M3.8 8.2 L6.6 11 L12.3 5.2" fill="none" stroke="#fff" stroke-width="1.3"/></svg>
<div class="a" style="left:1694px;top:969.0px;font-size:13.4px">Footprints</div>
<svg style="position:absolute;left:1780px;top:969.5px" width="16" height="16" viewBox="0 0 16 16"><rect x="0" y="0" width="16" height="16" rx="3" fill="#0f5fbf"/><path d="M3.8 8.2 L6.6 11 L12.3 5.2" fill="none" stroke="#fff" stroke-width="1.3"/></svg>
<div class="a" style="left:1799px;top:969.0px;font-size:13.4px">Text</div>
<svg style="position:absolute;left:1675px;top:989.5px" width="16" height="16" viewBox="0 0 16 16"><rect x="0" y="0" width="16" height="16" rx="3" fill="#0f5fbf"/><path d="M3.8 8.2 L6.6 11 L12.3 5.2" fill="none" stroke="#fff" stroke-width="1.3"/></svg>
<div class="a" style="left:1694px;top:989.0px;font-size:13.4px">Tracks</div>
<svg style="position:absolute;left:1780px;top:989.5px" width="16" height="16" viewBox="0 0 16 16"><rect x="0" y="0" width="16" height="16" rx="3" fill="#0f5fbf"/><path d="M3.8 8.2 L6.6 11 L12.3 5.2" fill="none" stroke="#fff" stroke-width="1.3"/></svg>
<div class="a" style="left:1799px;top:989.0px;font-size:13.4px">Vias</div>
<svg style="position:absolute;left:1675px;top:1009.5px" width="16" height="16" viewBox="0 0 16 16"><rect x="0" y="0" width="16" height="16" rx="3" fill="#0f5fbf"/><path d="M3.8 8.2 L6.6 11 L12.3 5.2" fill="none" stroke="#fff" stroke-width="1.3"/></svg>
<div class="a" style="left:1694px;top:1009.0px;font-size:13.4px">Pads</div>
<svg style="position:absolute;left:1780px;top:1009.5px" width="16" height="16" viewBox="0 0 16 16"><rect x="0" y="0" width="16" height="16" rx="3" fill="#0f5fbf"/><path d="M3.8 8.2 L6.6 11 L12.3 5.2" fill="none" stroke="#fff" stroke-width="1.3"/></svg>
<div class="a" style="left:1799px;top:1009.0px;font-size:13.4px">Graphics</div>
<svg style="position:absolute;left:1675px;top:1029.5px" width="16" height="16" viewBox="0 0 16 16"><rect x="0" y="0" width="16" height="16" rx="3" fill="#0f5fbf"/><path d="M3.8 8.2 L6.6 11 L12.3 5.2" fill="none" stroke="#fff" stroke-width="1.3"/></svg>
<div class="a" style="left:1694px;top:1029.0px;font-size:13.4px">Zones</div>
<svg style="position:absolute;left:1780px;top:1029.5px" width="16" height="16" viewBox="0 0 16 16"><rect x="0" y="0" width="16" height="16" rx="3" fill="#0f5fbf"/><path d="M3.8 8.2 L6.6 11 L12.3 5.2" fill="none" stroke="#fff" stroke-width="1.3"/></svg>
<div class="a" style="left:1799px;top:1029.0px;font-size:13.4px">Rule Areas</div>
<svg style="position:absolute;left:1675px;top:1049.5px" width="16" height="16" viewBox="0 0 16 16"><rect x="0" y="0" width="16" height="16" rx="3" fill="#0f5fbf"/><path d="M3.8 8.2 L6.6 11 L12.3 5.2" fill="none" stroke="#fff" stroke-width="1.3"/></svg>
<div class="a" style="left:1694px;top:1049.0px;font-size:13.4px">Dimensions</div>
<svg style="position:absolute;left:1780px;top:1049.5px" width="16" height="16" viewBox="0 0 16 16"><rect x="0" y="0" width="16" height="16" rx="3" fill="#0f5fbf"/><path d="M3.8 8.2 L6.6 11 L12.3 5.2" fill="none" stroke="#fff" stroke-width="1.3"/></svg>
<div class="a" style="left:1799px;top:1049.0px;font-size:13.4px">Other items</div>
<div class="a" style="left:0;top:1071px;width:1920px;height:69px;background:#f0f0f0"></div>
<div class="a" style="left:0;top:1112px;width:1920px;height:1px;background:#d9d9d9"></div>
<div class="a" style="left:14.5px;top:1075px;font-size:14.5px">Pads</div>
<div class="a" style="left:14.5px;top:1095px;font-size:14.5px">30</div>
<div class="a" style="left:83px;top:1075px;font-size:14.5px">Vias</div>
<div class="a" style="left:83px;top:1095px;font-size:14.5px">0</div>
<div class="a" style="left:148.4px;top:1075px;font-size:14.5px">Track Segments</div>
<div class="a" style="left:148.4px;top:1095px;font-size:14.5px">73</div>
<div class="a" style="left:290px;top:1075px;font-size:14.5px">Nets</div>
<div class="a" style="left:290px;top:1095px;font-size:14.5px">8</div>
<div class="a" style="left:358px;top:1075px;font-size:14.5px">Unrouted</div>
<div class="a" style="left:358px;top:1095px;font-size:14.5px">1</div>
<div class="a" style="left:584px;top:1114px;width:1px;height:26px;background:#d9d9d9"></div>
<div class="a" style="left:681.5px;top:1114px;width:1px;height:26px;background:#d9d9d9"></div>
<div class="a" style="left:885px;top:1114px;width:1px;height:26px;background:#d9d9d9"></div>
<div class="a" style="left:1206px;top:1114px;width:1px;height:26px;background:#d9d9d9"></div>
<div class="a" style="left:1439.5px;top:1114px;width:1px;height:26px;background:#d9d9d9"></div>
<div class="a" style="left:1516px;top:1114px;width:1px;height:26px;background:#d9d9d9"></div>
<div class="a" style="left:1731.5px;top:1114px;width:1px;height:26px;background:#d9d9d9"></div>
<div class="a" style="left:2.5px;top:1118.5px;font-size:14.5px;letter-spacing:0.13px;">File 'C:\Users\alcol\OneDrive\Documents\Forge1007\Forge1017\Forge1027\_autosav...</div>
<div class="a" style="left:590px;top:1118.5px;font-size:14.5px;">Z 6.28</div>
<div class="a" style="left:686px;top:1118.5px;font-size:14.5px;">X 39.0000&nbsp;&nbsp;Y 71.5000</div>
<div class="a" style="left:889px;top:1118.5px;font-size:14.5px;">dx 39.0000&nbsp;&nbsp;dy 71.5000&nbsp;&nbsp;dist 81.4448</div>
<div class="a" style="left:1210.5px;top:1118.5px;font-size:14.5px;">grid 0.5000</div>
<div class="a" style="left:1444px;top:1118.5px;font-size:14.5px;">mm</div>
<div class="a" style="left:1521px;top:1118.5px;font-size:14.5px;">Select item(s)</div>
</body></html>
